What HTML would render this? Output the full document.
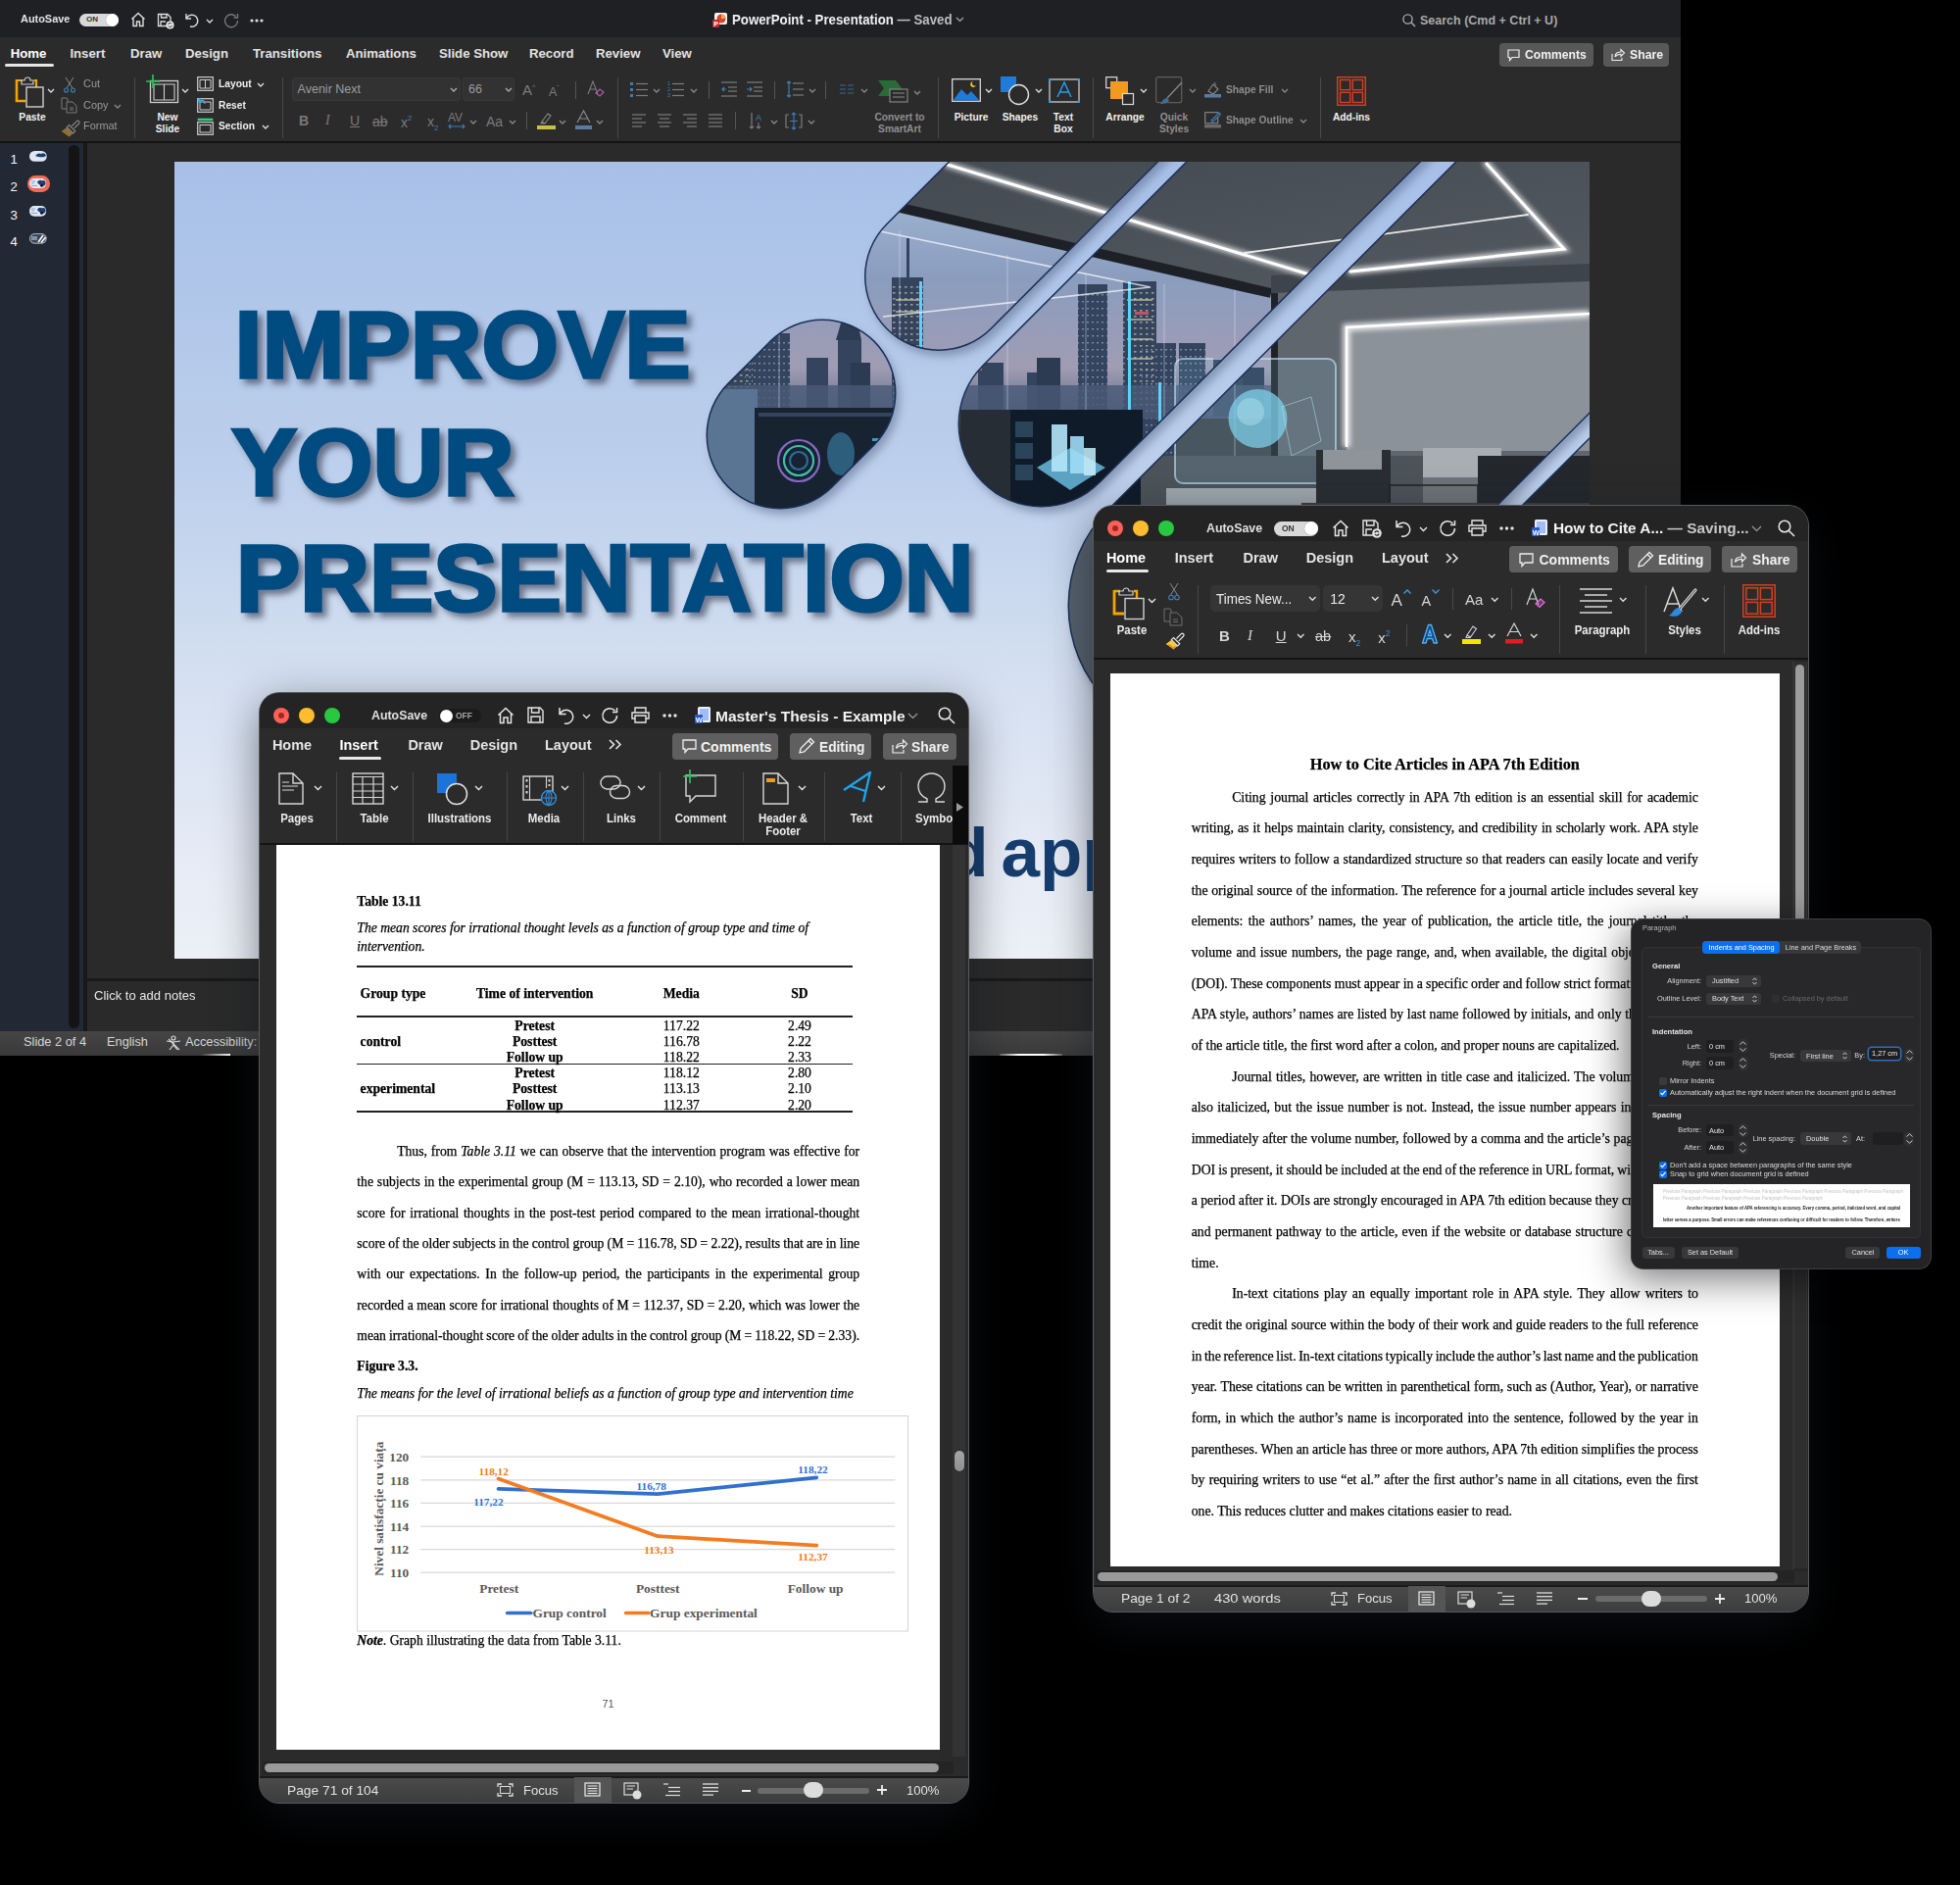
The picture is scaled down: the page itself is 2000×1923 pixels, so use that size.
<!DOCTYPE html>
<html><head><meta charset="utf-8">
<style>
*{margin:0;padding:0;box-sizing:border-box}
html,body{width:2000px;height:1923px;overflow:hidden;background:#000}
body{position:relative;font-family:"Liberation Sans",sans-serif;color:#e8e8e8}
.a{position:absolute}
.t{position:absolute;white-space:nowrap;line-height:1}
.b{font-weight:bold}
svg{position:absolute;overflow:visible}
.ic{fill:none;stroke:#cfcfcf;stroke-width:1.3}
.dim{color:#8e8e8e}
.ser{font-family:"Liberation Serif",serif;color:#000}
</style></head><body>
<div id="ppt" class="a" style="left:0;top:0;width:1715px;height:1077px;background:#2a2a2a;overflow:hidden">
<div class="a" style="left:0;top:0;width:1715px;height:38px;background:#1f2023"></div>
<div class="a" style="left:0;top:38px;width:1715px;height:106px;background:#2b2b2b"></div>
<div class="a" style="left:0;top:144px;width:1715px;height:2px;background:#131313"></div>
<div class="t" style="left:20.5px;top:14.4px;font-size:11.5px;color:#e4e4e4;font-weight:bold;transform:scaleX(0.95);transform-origin:0 0;">AutoSave</div>
<div class="a" style="left:81px;top:13.5px;width:40px;height:13.5px;border-radius:7px;background:#d9d9d9"></div><div class="t" style="left:88px;top:16.3px;font-size:8px;color:#333;font-weight:bold;">ON</div>
<div class="a" style="left:107.5px;top:14px;width:13px;height:12.5px;border-radius:7px;background:#fff;box-shadow:0 0 1px #777"></div>
<svg style="left:133px;top:12px" width="16" height="16"><path d="M1.5,7.5 L8,1.5 L14.5,7.5 M3,6.5 V14.5 H6.5 V10 H9.5 V14.5 H13 V6.5" fill="none" stroke="#ddd" stroke-width="1.4"/></svg>
<svg style="left:160px;top:12.5px" width="18" height="16"><path d="M1.5,1.5 H11 L14,4.5 V13.5 H1.5 Z M4.5,1.5 V5 H10 V1.5 M4,13.5 V9 H9" fill="none" stroke="#ddd" stroke-width="1.3"/><circle cx="13.5" cy="12.5" r="4" fill="#eee"/><path d="M11.6,12 A2,2 0 0 1 15.3,11.5 M15.4,13 A2,2 0 0 1 11.7,13.5" stroke="#222" fill="none" stroke-width="1"/></svg>
<svg style="left:188px;top:12px" width="16" height="16"><path d="M2,2 V7 H7 M2.3,6.8 A6,6 0 1 1 6,15" fill="none" stroke="#ddd" stroke-width="1.4"/></svg>
<svg style="left:211px;top:19.5px" width="6" height="3.0"><polyline points="0,0 3.0,3.0 6,0" fill="none" stroke="#ddd" stroke-width="1.4"/></svg>
<svg style="left:228px;top:12.5px" width="16" height="16"><path d="M12.5,3.5 A6.5,6.5 0 1 0 14.5,8 M14.5,1 V5 H10.5" fill="none" stroke="#777" stroke-width="1.4"/></svg>
<svg style="left:255px;top:19px" width="14" height="4"><circle cx="2" cy="2" r="1.6" fill="#ddd"/><circle cx="7" cy="2" r="1.6" fill="#ddd"/><circle cx="12" cy="2" r="1.6" fill="#ddd"/></svg>
<svg style="left:727px;top:13px" width="15" height="15"><rect x="2" y="0" width="13" height="12" rx="2" fill="#f5f5f5"/><circle cx="9" cy="6" r="4.5" fill="#d9452b"/><path d="M9,6 V1.5 A4.5,4.5 0 0 1 13.5,6 Z" fill="#f1a35a"/><rect x="0" y="7" width="7" height="8" rx="1" fill="#c4262e"/><text x="1.3" y="13.5" font-size="7" font-weight="bold" fill="#fff" font-family="Liberation Sans">P</text></svg>
<div class="t" style="left:746.5px;top:13.8px;font-size:13.8px;color:#f0f0f0;font-weight:bold;transform:scaleX(0.96);transform-origin:0 0;">PowerPoint - Presentation <span style="color:#bdbdbd">— Saved</span></div>
<svg style="left:976px;top:18.2px" width="7" height="3.5"><polyline points="0,0 3.5,3.5 7,0" fill="none" stroke="#aaa" stroke-width="1.2"/></svg>
<svg style="left:1431px;top:14px" width="14" height="14"><circle cx="5.5" cy="5.5" r="4.6" fill="none" stroke="#a8a8a8" stroke-width="1.4"/><line x1="8.8" y1="8.8" x2="13" y2="13" stroke="#a8a8a8" stroke-width="1.5"/></svg>
<div class="t" style="left:1449px;top:15.4px;font-size:12.5px;color:#a9a9a9;font-weight:bold;">Search (Cmd + Ctrl + U)</div>
<div class="t" style="left:10.7px;top:47.6px;font-size:13.2px;color:#ffffff;font-weight:bold;">Home</div>
<div class="t" style="left:71.4px;top:47.6px;font-size:13.2px;color:#e2e2e2;font-weight:bold;">Insert</div>
<div class="t" style="left:133px;top:47.6px;font-size:13.2px;color:#e2e2e2;font-weight:bold;">Draw</div>
<div class="t" style="left:189px;top:47.6px;font-size:13.2px;color:#e2e2e2;font-weight:bold;">Design</div>
<div class="t" style="left:258px;top:47.6px;font-size:13.2px;color:#e2e2e2;font-weight:bold;">Transitions</div>
<div class="t" style="left:353px;top:47.6px;font-size:13.2px;color:#e2e2e2;font-weight:bold;">Animations</div>
<div class="t" style="left:448px;top:47.6px;font-size:13.2px;color:#e2e2e2;font-weight:bold;">Slide Show</div>
<div class="t" style="left:540px;top:47.6px;font-size:13.2px;color:#e2e2e2;font-weight:bold;">Record</div>
<div class="t" style="left:608px;top:47.6px;font-size:13.2px;color:#e2e2e2;font-weight:bold;">Review</div>
<div class="t" style="left:676px;top:47.6px;font-size:13.2px;color:#e2e2e2;font-weight:bold;">View</div>
<div class="a" style="left:5px;top:65px;width:50px;height:3px;border-radius:2px;background:#e6e6e6"></div>
<div class="a" style="left:1530px;top:44px;width:96px;height:24px;border-radius:4px;background:#585858"></div>
<svg style="left:1538px;top:50px" width="13" height="13"><path d="M1,1 H12 V8.5 H5 L2.5,11.5 V8.5 H1 Z" fill="none" stroke="#eee" stroke-width="1.2"/></svg>
<div class="t" style="left:1556px;top:49.8px;font-size:12.8px;color:#f2f2f2;font-weight:bold;transform:scaleX(0.95);transform-origin:0 0;">Comments</div>
<div class="a" style="left:1636px;top:44px;width:67px;height:24px;border-radius:4px;background:#585858"></div>
<svg style="left:1644px;top:49px" width="14" height="14"><path d="M1,6 V12.5 H11 V10 M4,9 C4,5 7,4 10,4 V1.5 L13.5,5 L10,8.5 V6.2 C7.5,6.2 5.5,7 4,9" fill="none" stroke="#eee" stroke-width="1.1"/></svg>
<div class="t" style="left:1663px;top:49.8px;font-size:12.8px;color:#f2f2f2;font-weight:bold;transform:scaleX(0.96);transform-origin:0 0;">Share</div>
<svg style="left:15px;top:77px" width="32" height="33"><path d="M2,5 H8 M20,5 H22 V16" fill="none" stroke="#f2a500" stroke-width="2.2"/><path d="M2,4 V26 H11" fill="none" stroke="#f2a500" stroke-width="2.6"/><path d="M7,5 H10 A3,3 0 0 1 16,5 H19 V9 H7 Z" fill="none" stroke="#cfcfcf" stroke-width="1.2"/><rect x="12" y="12" width="17" height="20" fill="#2b2b2b" stroke="#d0d0d0" stroke-width="1.4"/></svg>
<svg style="left:49px;top:90.5px" width="6" height="3.0"><polyline points="0,0 3.0,3.0 6,0" fill="none" stroke="#ddd" stroke-width="1.4"/></svg>
<div class="t" style="left:33px;top:113.9px;font-size:11.5px;color:#f0f0f0;font-weight:bold;transform:translateX(-50%) scaleX(0.89);transform-origin:50% 0;">Paste</div>
<svg style="left:64px;top:79px" width="14" height="16"><path d="M3,0 L10,11 M11,0 L4,11" stroke="#8a8a8a" stroke-width="1" fill="none"/><circle cx="3.5" cy="13" r="2" fill="none" stroke="#3f7fb5" stroke-width="1.1"/><circle cx="10.5" cy="13" r="2" fill="none" stroke="#3f7fb5" stroke-width="1.1"/></svg>
<div class="t" style="left:84.6px;top:79.8px;font-size:11.5px;color:#9a9a9a;transform:scaleX(0.95);transform-origin:0 0;">Cut</div>
<svg style="left:62px;top:99px" width="17" height="17"><path d="M1,1 H6 L7,2 V12 H1 Z" fill="none" stroke="#7a7a7a" stroke-width="1"/><path d="M6,5 H12 L16,9 V16 H6 Z M9,11 H13 M9,13 H13" fill="#2b2b2b" stroke="#7a7a7a" stroke-width="1"/></svg>
<div class="t" style="left:84.6px;top:101.9px;font-size:11.5px;color:#9a9a9a;transform:scaleX(0.95);transform-origin:0 0;">Copy</div>
<svg style="left:116.5px;top:106.5px" width="6" height="3.0"><polyline points="0,0 3.0,3.0 6,0" fill="none" stroke="#888" stroke-width="1.4"/></svg>
<svg style="left:62px;top:121px" width="20" height="19"><path d="M11.5,7.5 L16.3,2.7 A1.6,1.6 0 0 1 18.6,5 L13.8,9.8" fill="none" stroke="#8a8a8a" stroke-width="1.1"/><path d="M8.5,6.5 L14.8,12.8 L12.6,15 L6.3,8.7 Z" fill="none" stroke="#8a8a8a" stroke-width="1.1"/><path d="M6.3,8.7 L12.6,15 L8.5,18.5 L0.8,13 Z" fill="#8b7045"/><path d="M3.5,13.5 L8.5,17.5 L10.5,15.5" fill="none" stroke="#9a6a30" stroke-width="1.5"/></svg>
<div class="t" style="left:84.6px;top:123.4px;font-size:11.5px;color:#9a9a9a;transform:scaleX(0.95);transform-origin:0 0;">Format</div>
<div class="a" style="left:137px;top:79px;width:1px;height:62px;background:#4a4a4a"></div>
<svg style="left:149px;top:76px" width="34" height="30"><rect x="4.5" y="6.5" width="28" height="22" fill="none" stroke="#cfcfcf" stroke-width="1.3"/><path d="M8,10 H29 V26 H8 Z M18.5,10 V26" fill="none" stroke="#cfcfcf" stroke-width="1.1"/><path d="M7,0 V14 M0,7 H14" stroke="#22c35e" stroke-width="1.7"/></svg>
<svg style="left:186px;top:90.5px" width="6" height="3.0"><polyline points="0,0 3.0,3.0 6,0" fill="none" stroke="#ddd" stroke-width="1.4"/></svg>
<div class="t" style="left:171px;top:113.9px;font-size:11.5px;color:#f0f0f0;font-weight:bold;transform:translateX(-50%) scaleX(0.89);transform-origin:50% 0;">New</div>
<div class="t" style="left:171px;top:125.9px;font-size:11.5px;color:#f0f0f0;font-weight:bold;transform:translateX(-50%) scaleX(0.89);transform-origin:50% 0;">Slide</div>
<svg style="left:201px;top:78px" width="17" height="15"><rect x="0.7" y="0.7" width="15.6" height="13.6" fill="none" stroke="#cfcfcf" stroke-width="1.2"/><path d="M3,3.5 H14 V12 H3 Z M8.5,3.5 V12" fill="none" stroke="#cfcfcf" stroke-width="1"/></svg>
<div class="t" style="left:223px;top:80.1px;font-size:11.5px;color:#f0f0f0;font-weight:bold;transform:scaleX(0.89);transform-origin:0 0;">Layout</div>
<svg style="left:263px;top:84.5px" width="6" height="3.0"><polyline points="0,0 3.0,3.0 6,0" fill="none" stroke="#ddd" stroke-width="1.4"/></svg>
<svg style="left:201px;top:99px" width="17" height="16"><rect x="0.7" y="1.7" width="15.6" height="13.6" fill="none" stroke="#cfcfcf" stroke-width="1.2"/><path d="M3,5 H14 V13 H3 Z" fill="none" stroke="#cfcfcf" stroke-width="1"/><path d="M1,3.5 L3.5,1 M1,3.5 L3.5,6 M1.5,3.5 H5 A3,3 0 0 1 8,7" fill="none" stroke="#3fa6e8" stroke-width="1.4"/></svg>
<div class="t" style="left:223px;top:101.9px;font-size:11.5px;color:#f0f0f0;font-weight:bold;transform:scaleX(0.89);transform-origin:0 0;">Reset</div>
<svg style="left:201px;top:120px" width="17" height="18"><rect x="0.7" y="0.7" width="15.6" height="2.5" fill="#2fd07a"/><rect x="0.7" y="4.7" width="15.6" height="12.6" fill="none" stroke="#cfcfcf" stroke-width="1.2"/><rect x="3" y="7.5" width="11" height="7.5" fill="none" stroke="#cfcfcf" stroke-width="1"/></svg>
<div class="t" style="left:223px;top:123.4px;font-size:11.5px;color:#f0f0f0;font-weight:bold;transform:scaleX(0.89);transform-origin:0 0;">Section</div>
<svg style="left:268px;top:128.0px" width="6" height="3.0"><polyline points="0,0 3.0,3.0 6,0" fill="none" stroke="#ddd" stroke-width="1.4"/></svg>
<div class="a" style="left:287.5px;top:79px;width:1px;height:62px;background:#4a4a4a"></div>
<div class="a" style="left:297.5px;top:79px;width:172px;height:24px;border-radius:4px;background:#323232;box-shadow:inset 0 0 0 1px #383838"></div>
<div class="t" style="left:303.6px;top:84.9px;font-size:12.5px;color:#9d9d9d;">Avenir Next</div>
<svg style="left:459.5px;top:90.0px" width="6" height="3.0"><polyline points="0,0 3.0,3.0 6,0" fill="none" stroke="#aaa" stroke-width="1.4"/></svg>
<div class="a" style="left:472px;top:79px;width:53px;height:24px;border-radius:4px;background:#323232;box-shadow:inset 0 0 0 1px #383838"></div>
<div class="t" style="left:478px;top:84.9px;font-size:12.5px;color:#9d9d9d;">66</div>
<svg style="left:515.5px;top:90.0px" width="6" height="3.0"><polyline points="0,0 3.0,3.0 6,0" fill="none" stroke="#aaa" stroke-width="1.4"/></svg>
<div class="t" style="left:533px;top:83.7px;font-size:15px;color:#7c7c7c;">A<sup style="font-size:7px;vertical-align:6px">^</sup></div>
<div class="t" style="left:560px;top:85.9px;font-size:12.5px;color:#7c7c7c;">A<sup style="font-size:7px;vertical-align:6px;color:#4b8fc4">ˇ</sup></div>
<div class="a" style="left:587px;top:83px;width:1px;height:18px;background:#555"></div>
<svg style="left:599px;top:82px" width="18" height="18"><path d="M1,14 L6,1 L11,14 M3,9 H9" fill="none" stroke="#7c7c7c" stroke-width="1.1"/><path d="M9,13 L13,9 L17,12 L13,16 Z" fill="none" stroke="#b05aa8" stroke-width="1.2"/></svg>
<svg style="left:643px;top:83px" width="18" height="16"><g fill="#3d7eb8"><rect x="0" y="1" width="3" height="3"/><rect x="0" y="7" width="3" height="3"/><rect x="0" y="13" width="3" height="3"/></g><g stroke="#7c7c7c" stroke-width="1.2"><line x1="6" y1="2.5" x2="18" y2="2.5"/><line x1="6" y1="8.5" x2="18" y2="8.5"/><line x1="6" y1="14.5" x2="18" y2="14.5"/></g></svg>
<svg style="left:667px;top:90.5px" width="6" height="3.0"><polyline points="0,0 3.0,3.0 6,0" fill="none" stroke="#888" stroke-width="1.4"/></svg>
<svg style="left:681px;top:82px" width="17" height="18"><g fill="#3d7eb8" font-size="5.5" font-family="Liberation Sans"><text x="0" y="5">1</text><text x="0" y="11">2</text><text x="0" y="17">3</text></g><g stroke="#7c7c7c" stroke-width="1.2"><line x1="5" y1="3.5" x2="17" y2="3.5"/><line x1="5" y1="9.5" x2="17" y2="9.5"/><line x1="5" y1="15.5" x2="17" y2="15.5"/></g></svg>
<svg style="left:705px;top:90.5px" width="6" height="3.0"><polyline points="0,0 3.0,3.0 6,0" fill="none" stroke="#888" stroke-width="1.4"/></svg>
<div class="a" style="left:723px;top:83px;width:1px;height:18px;background:#555"></div>
<svg style="left:736px;top:83px" width="16" height="16"><g stroke="#7c7c7c" stroke-width="1.2"><line x1="0" y1="1" x2="16" y2="1"/><line x1="7" y1="6" x2="16" y2="6"/><line x1="7" y1="10" x2="16" y2="10"/><line x1="0" y1="15" x2="16" y2="15"/></g><path d="M5,8 H1 M3,6 L1,8 L3,10" stroke="#3d7eb8" stroke-width="1.2" fill="none"/></svg>
<svg style="left:762px;top:83px" width="16" height="16"><g stroke="#7c7c7c" stroke-width="1.2"><line x1="0" y1="1" x2="16" y2="1"/><line x1="7" y1="6" x2="16" y2="6"/><line x1="7" y1="10" x2="16" y2="10"/><line x1="0" y1="15" x2="16" y2="15"/></g><path d="M0,8 H5 M3,6 L5,8 L3,10" stroke="#3d7eb8" stroke-width="1.2" fill="none"/></svg>
<div class="a" style="left:789.5px;top:83px;width:1px;height:18px;background:#555"></div>
<svg style="left:802px;top:82px" width="18" height="18"><g stroke="#7c7c7c" stroke-width="1.2"><line x1="7" y1="3" x2="18" y2="3"/><line x1="7" y1="9" x2="18" y2="9"/><line x1="7" y1="15" x2="18" y2="15"/></g><path d="M3,1 V17 M1,3 L3,1 L5,3 M1,15 L3,17 L5,15" stroke="#3d7eb8" stroke-width="1.2" fill="none"/></svg>
<svg style="left:826px;top:90.5px" width="6" height="3.0"><polyline points="0,0 3.0,3.0 6,0" fill="none" stroke="#888" stroke-width="1.4"/></svg>
<div class="a" style="left:842px;top:83px;width:1px;height:18px;background:#555"></div>
<svg style="left:857px;top:86px" width="14" height="10"><g stroke="#3d5f82" stroke-width="1.2"><line x1="0" y1="1" x2="6" y2="1"/><line x1="0" y1="5" x2="6" y2="5"/><line x1="0" y1="9" x2="6" y2="9"/><line x1="8" y1="1" x2="14" y2="1"/><line x1="8" y1="5" x2="14" y2="5"/><line x1="8" y1="9" x2="14" y2="9"/></g></svg>
<svg style="left:879px;top:90.5px" width="6" height="3.0"><polyline points="0,0 3.0,3.0 6,0" fill="none" stroke="#888" stroke-width="1.4"/></svg>
<svg style="left:896px;top:82px" width="31" height="23"><path d="M0,0 H18 L24,8 L18,16 H0 L6,8 Z" fill="#2a6b3a"/><rect x="12" y="9" width="18" height="13" fill="#2b2b2b" stroke="#8a8a8a" stroke-width="1.1"/><g stroke="#8a8a8a"><line x1="15" y1="13" x2="27" y2="13"/><line x1="15" y1="17" x2="27" y2="17"/></g></svg>
<svg style="left:933px;top:92.5px" width="6" height="3.0"><polyline points="0,0 3.0,3.0 6,0" fill="none" stroke="#888" stroke-width="1.4"/></svg>
<div class="t" style="left:918px;top:113.9px;font-size:11.5px;color:#8f8f8f;font-weight:bold;transform:translateX(-50%) scaleX(0.89);transform-origin:50% 0;">Convert to</div>
<div class="t" style="left:918px;top:125.9px;font-size:11.5px;color:#8f8f8f;font-weight:bold;transform:translateX(-50%) scaleX(0.89);transform-origin:50% 0;">SmartArt</div>
<div class="t" style="left:305px;top:116.2px;font-size:14px;color:#7a7a7a;font-weight:bold;">B</div>
<div class="t" style="left:332px;top:116.2px;font-size:14px;color:#7a7a7a;font-style:italic;font-family:Liberation Serif;">I</div>
<div class="t" style="left:357px;top:116.2px;font-size:14px;color:#7a7a7a;text-decoration:underline;">U</div>
<div class="t" style="left:380px;top:117.2px;font-size:14px;color:#7a7a7a;"><s>ab</s></div>
<div class="t" style="left:409px;top:117.2px;font-size:14px;color:#7a7a7a;">x<sup style="font-size:8px;color:#3d7eb8;vertical-align:7px">2</sup></div>
<div class="t" style="left:436px;top:117.2px;font-size:14px;color:#7a7a7a;">x<sub style="font-size:8px;color:#3d7eb8;vertical-align:-4px">2</sub></div>
<svg style="left:457px;top:114px" width="19" height="19"><text x="0" y="10" font-size="12" fill="#7a7a7a" font-family="Liberation Sans">AV</text><path d="M1,15 H17 M3,13 L1,15 L3,17 M15,13 L17,15 L15,17" stroke="#3d7eb8" stroke-width="1.1" fill="none"/></svg>
<svg style="left:480px;top:122.5px" width="6" height="3.0"><polyline points="0,0 3.0,3.0 6,0" fill="none" stroke="#888" stroke-width="1.4"/></svg>
<div class="t" style="left:496px;top:117.2px;font-size:14px;color:#7a7a7a;">Aa</div>
<svg style="left:520px;top:122.5px" width="6" height="3.0"><polyline points="0,0 3.0,3.0 6,0" fill="none" stroke="#888" stroke-width="1.4"/></svg>
<div class="a" style="left:536.5px;top:114px;width:1px;height:18px;background:#555"></div>
<svg style="left:548px;top:113px" width="19" height="20"><path d="M5,11 L11,3 L14,5 L8,13 Z M5,11 L4,13 H8" fill="none" stroke="#8a8a8a" stroke-width="1.1"/><rect x="0" y="15" width="19" height="4" fill="#c9c04a"/></svg>
<svg style="left:571px;top:122.5px" width="6" height="3.0"><polyline points="0,0 3.0,3.0 6,0" fill="none" stroke="#888" stroke-width="1.4"/></svg>
<svg style="left:587px;top:112px" width="17" height="21"><path d="M2,13 L8.5,1 L15,13 M4.5,9 H12.5" fill="none" stroke="#8a8a8a" stroke-width="1.2"/><rect x="0" y="16" width="17" height="4" fill="#5a7aa5"/></svg>
<svg style="left:609px;top:122.5px" width="6" height="3.0"><polyline points="0,0 3.0,3.0 6,0" fill="none" stroke="#888" stroke-width="1.4"/></svg>
<div class="a" style="left:630px;top:79px;width:1px;height:62px;background:#4a4a4a"></div>
<svg style="left:644.5px;top:116px" width="15" height="15"><g stroke="#7c7c7c" stroke-width="1.2"><line x1="0" y1="1" x2="14" y2="1"/><line x1="0" y1="5" x2="10" y2="5"/><line x1="0" y1="9" x2="14" y2="9"/><line x1="0" y1="13" x2="10" y2="13"/></g></svg>
<svg style="left:671px;top:116px" width="15" height="15"><g stroke="#7c7c7c" stroke-width="1.2"><line x1="0" y1="1" x2="14" y2="1"/><line x1="2" y1="5" x2="12" y2="5"/><line x1="0" y1="9" x2="14" y2="9"/><line x1="2" y1="13" x2="12" y2="13"/></g></svg>
<svg style="left:697px;top:116px" width="15" height="15"><g stroke="#7c7c7c" stroke-width="1.2"><line x1="0" y1="1" x2="14" y2="1"/><line x1="4" y1="5" x2="14" y2="5"/><line x1="0" y1="9" x2="14" y2="9"/><line x1="4" y1="13" x2="14" y2="13"/></g></svg>
<svg style="left:723px;top:116px" width="15" height="15"><g stroke="#7c7c7c" stroke-width="1.2"><line x1="0" y1="1" x2="14" y2="1"/><line x1="0" y1="5" x2="14" y2="5"/><line x1="0" y1="9" x2="14" y2="9"/><line x1="0" y1="13" x2="14" y2="13"/></g></svg>
<div class="a" style="left:750px;top:114px;width:1px;height:18px;background:#555"></div>
<svg style="left:764px;top:114px" width="16" height="19"><path d="M3,1 V17 M1,15 L3,17 L5,15" stroke="#7c7c7c" stroke-width="1.2" fill="none"/><text x="7" y="9" font-size="9" fill="#3d7eb8" font-family="Liberation Sans">A</text><path d="M10,11 V17 M8,15 L10,17 L12,15" stroke="#7c7c7c" stroke-width="1.1" fill="none"/></svg>
<svg style="left:786.5px;top:122.5px" width="6" height="3.0"><polyline points="0,0 3.0,3.0 6,0" fill="none" stroke="#888" stroke-width="1.4"/></svg>
<svg style="left:801px;top:115px" width="18" height="17"><path d="M4,2 H1 V15 H4 M14,2 H17 V15 H14" stroke="#7c7c7c" stroke-width="1.2" fill="none"/><path d="M9,0 V17 M7,2 L9,0 L11,2 M7,15 L9,17 L11,15 M5,8.5 H13" stroke="#3d7eb8" stroke-width="1.1" fill="none"/></svg>
<svg style="left:824.5px;top:122.5px" width="6" height="3.0"><polyline points="0,0 3.0,3.0 6,0" fill="none" stroke="#888" stroke-width="1.4"/></svg>
<div class="a" style="left:957px;top:79px;width:1px;height:62px;background:#4a4a4a"></div>
<svg style="left:971px;top:80px" width="30" height="24"><rect x="0.7" y="0.7" width="28.6" height="22.6" fill="#2b2b2b" stroke="#d8d8d8" stroke-width="1.3"/><path d="M1.5,22.5 L10,11 L16,17 L20,13 L28.5,22.5 Z" fill="#1e7bd8"/><path d="M22,3 A3,3 0 1 0 25,7 A2.5,2.5 0 0 1 22,3" fill="#f0c030"/></svg>
<svg style="left:1006px;top:90.5px" width="6" height="3.0"><polyline points="0,0 3.0,3.0 6,0" fill="none" stroke="#ddd" stroke-width="1.4"/></svg>
<div class="t" style="left:991px;top:113.9px;font-size:11.5px;color:#f0f0f0;font-weight:bold;transform:translateX(-50%) scaleX(0.89);transform-origin:50% 0;">Picture</div>
<svg style="left:1021px;top:78px" width="30" height="30"><rect x="0" y="0" width="16" height="16" fill="#1e7bd8"/><circle cx="18.5" cy="18.5" r="10" fill="#2b2b2b" stroke="#e0e0e0" stroke-width="1.4"/></svg>
<svg style="left:1057px;top:90.5px" width="6" height="3.0"><polyline points="0,0 3.0,3.0 6,0" fill="none" stroke="#ddd" stroke-width="1.4"/></svg>
<div class="t" style="left:1041px;top:113.9px;font-size:11.5px;color:#f0f0f0;font-weight:bold;transform:translateX(-50%) scaleX(0.89);transform-origin:50% 0;">Shapes</div>
<svg style="left:1070px;top:80px" width="32" height="25"><rect x="1" y="1" width="30" height="23" fill="none" stroke="#d8d8d8" stroke-width="1.2"/><g fill="#2a9df0"><rect x="0" y="0" width="2.5" height="2.5"/><rect x="29.5" y="0" width="2.5" height="2.5"/><rect x="0" y="22.5" width="2.5" height="2.5"/><rect x="29.5" y="22.5" width="2.5" height="2.5"/></g><path d="M9,19 L16,4 L23,19 M11.5,14 H20.5" fill="none" stroke="#2a9df0" stroke-width="1.4"/></svg>
<div class="t" style="left:1085px;top:113.9px;font-size:11.5px;color:#f0f0f0;font-weight:bold;transform:translateX(-50%) scaleX(0.89);transform-origin:50% 0;">Text</div>
<div class="t" style="left:1085px;top:125.9px;font-size:11.5px;color:#f0f0f0;font-weight:bold;transform:translateX(-50%) scaleX(0.89);transform-origin:50% 0;">Box</div>
<div class="a" style="left:1115px;top:79px;width:1px;height:62px;background:#4a4a4a"></div>
<svg style="left:1128px;top:78px" width="30" height="30"><rect x="0.7" y="0.7" width="11" height="11" fill="#2b2b2b" stroke="#ddd" stroke-width="1.2"/><rect x="5" y="5" width="18" height="18" fill="#f29a1f"/><rect x="17.5" y="17.5" width="11" height="11" fill="#2b2b2b" stroke="#ddd" stroke-width="1.2"/></svg>
<svg style="left:1164px;top:90.5px" width="6" height="3.0"><polyline points="0,0 3.0,3.0 6,0" fill="none" stroke="#ddd" stroke-width="1.4"/></svg>
<div class="t" style="left:1147.5px;top:113.9px;font-size:11.5px;color:#f0f0f0;font-weight:bold;transform:translateX(-50%) scaleX(0.89);transform-origin:50% 0;">Arrange</div>
<svg style="left:1179px;top:78px" width="30" height="30"><rect x="0.7" y="0.7" width="26" height="26" rx="2" fill="none" stroke="#5e5e5e" stroke-width="1.2"/><path d="M27,6 L12,22" stroke="#8a8a8a" stroke-width="1.2"/><path d="M12,22 C8,22 7,26 5,28 C9,28 13,27 14,24 Z" fill="#3d6f9a"/></svg>
<svg style="left:1214px;top:90.5px" width="6" height="3.0"><polyline points="0,0 3.0,3.0 6,0" fill="none" stroke="#888" stroke-width="1.4"/></svg>
<div class="t" style="left:1198px;top:113.9px;font-size:11.5px;color:#8f8f8f;font-weight:bold;transform:translateX(-50%) scaleX(0.89);transform-origin:50% 0;">Quick</div>
<div class="t" style="left:1198px;top:125.9px;font-size:11.5px;color:#8f8f8f;font-weight:bold;transform:translateX(-50%) scaleX(0.89);transform-origin:50% 0;">Styles</div>
<svg style="left:1229px;top:83px" width="17" height="17"><path d="M4,10 L9,3 L14,8 L9,13 Z" fill="none" stroke="#8a8a8a" stroke-width="1.1"/><path d="M10,1 L12,4" stroke="#8a8a8a"/><rect x="0" y="13" width="17" height="3.5" fill="#5a7aa5"/></svg>
<div class="t" style="left:1251px;top:85.8px;font-size:11.5px;color:#8f8f8f;font-weight:bold;transform:scaleX(0.89);transform-origin:0 0;">Shape Fill</div>
<svg style="left:1308px;top:90.5px" width="6" height="3.0"><polyline points="0,0 3.0,3.0 6,0" fill="none" stroke="#888" stroke-width="1.4"/></svg>
<svg style="left:1229px;top:114px" width="17" height="17"><rect x="0.7" y="0.7" width="13" height="11" fill="none" stroke="#8a8a8a" stroke-width="1.1"/><path d="M7,9 L15,1 L16.5,2.5 L8.5,10.5 Z" fill="#2b2b2b" stroke="#3d7eb8" stroke-width="1.1"/><rect x="0" y="13" width="17" height="3.5" fill="#6a6a6a"/></svg>
<div class="t" style="left:1251px;top:117.4px;font-size:11.5px;color:#8f8f8f;font-weight:bold;transform:scaleX(0.89);transform-origin:0 0;">Shape Outline</div>
<svg style="left:1327px;top:121.5px" width="6" height="3.0"><polyline points="0,0 3.0,3.0 6,0" fill="none" stroke="#888" stroke-width="1.4"/></svg>
<div class="a" style="left:1347px;top:79px;width:1px;height:62px;background:#4a4a4a"></div>
<svg style="left:1364px;top:78px" width="30" height="30"><g fill="none" stroke="#d5401f" stroke-width="1.4"><rect x="0.7" y="0.7" width="28.6" height="28.6"/><rect x="3.5" y="3.5" width="10.2" height="10.2"/><rect x="16.3" y="3.5" width="10.2" height="10.2"/><rect x="3.5" y="16.3" width="10.2" height="10.2"/><rect x="16.3" y="16.3" width="10.2" height="10.2"/></g></svg>
<div class="t" style="left:1379px;top:113.9px;font-size:11.5px;color:#f0f0f0;font-weight:bold;transform:translateX(-50%) scaleX(0.89);transform-origin:50% 0;">Add-ins</div>
<div class="a" style="left:0;top:146px;width:85px;height:906px;background:#222935"></div>
<div class="a" style="left:70px;top:148px;width:11px;height:901px;background:#141414;border-radius:6px"></div>
<div class="a" style="left:85px;top:146px;width:4px;height:906px;background:#181818"></div>
<div class="t" style="left:10.5px;top:156.1px;font-size:13.2px;color:#f4f4f4;">1</div>
<svg style="left:30.4px;top:153.8px" width="18" height="11"><rect x="0" y="0" width="17.7" height="10.7" rx="5.3" fill="#dfe7f2"/><path d="M6,5 C8,2 11,2 12,3 C14,1 17,3 17,5 C15,7 11,6 9,6 Z" fill="#1d3d70"/></svg>
<div class="t" style="left:10.5px;top:184.2px;font-size:13.2px;color:#f4f4f4;">2</div>
<div class="a" style="left:27.5px;top:179.2px;width:23.1px;height:16.4px;border-radius:8.2px;background:#f26a55"></div>
<svg style="left:30.4px;top:182.2px" width="18" height="11"><rect x="0" y="0" width="17.1" height="10.1" rx="5" fill="#dfe8f3"/><g stroke="#6f8fb8" stroke-width=".7"><line x1="2" y1="3" x2="6" y2="3"/><line x1="2" y1="5" x2="5" y2="5"/><line x1="2" y1="7.5" x2="8" y2="7.5"/></g><path d="M8,4 C9,1.5 12,1 13,2.5 C15,1 17,3 16.5,6 C15,8.5 12,8 11,7 C10,6 9,5.5 8,4 Z" fill="#1d3d70"/><circle cx="12.5" cy="7.5" r="1.3" fill="#000"/></svg>
<div class="t" style="left:10.5px;top:212.5px;font-size:13.2px;color:#f4f4f4;">3</div>
<svg style="left:30.4px;top:210px" width="18" height="11"><rect x="0" y="0" width="17.1" height="10.7" rx="5" fill="#dfe8f3"/><g stroke="#6f8fb8" stroke-width=".7"><line x1="2" y1="3" x2="6" y2="3"/><line x1="2" y1="5" x2="5" y2="5"/><line x1="2" y1="7.5" x2="8" y2="7.5"/></g><path d="M8,4 C9,1.5 12,1 13,2.5 C15,1 17,3 16.5,6 C15,8.5 12,8 11,7 C10,6 9,5.5 8,4 Z" fill="#1d3d70"/><circle cx="12.5" cy="7.5" r="1.3" fill="#000"/></svg>
<div class="t" style="left:10.5px;top:240.4px;font-size:13.2px;color:#f4f4f4;">4</div>
<svg style="left:30.4px;top:238px" width="18" height="11"><rect x="0" y="0" width="17.7" height="10.7" rx="5.3" fill="#5d6670"/><rect x="0.6" y="0.6" width="16.5" height="9.5" rx="4.8" fill="#3b4654" stroke="#c8ccd2" stroke-width=".8"/><path d="M9,9 L14,2 M12,9.5 L16.5,4" stroke="#fff" stroke-width="1.6"/><rect x="2" y="3" width="6" height="4" fill="#7d94aa"/></svg>
<div class="a" style="left:89px;top:998px;width:1626px;height:3px;background:#191919"></div>
<div class="t" style="left:96px;top:1008.9px;font-size:13.5px;color:#e8e8e8;transform:scaleX(0.965);transform-origin:0 0;">Click to add notes</div>
<div class="a" style="left:0;top:1052px;width:1715px;height:25px;background:linear-gradient(#454545,#393939)"></div>
<div class="t" style="left:24px;top:1057.3px;font-size:12.8px;color:#d6d6d6;">Slide 2 of 4</div>
<div class="t" style="left:109px;top:1057.3px;font-size:12.8px;color:#d6d6d6;">English</div>
<svg style="left:169px;top:1056px" width="16" height="16"><circle cx="8" cy="3" r="2" fill="none" stroke="#ddd" stroke-width="1.1"/><path d="M1,6 L8,7 L15,6 M8,7 V10 L4,15 M8,10 L12,15" fill="none" stroke="#ddd" stroke-width="1.1"/><path d="M3,4 L14,15" stroke="#ddd" stroke-width="1.1"/></svg>
<div class="t" style="left:189px;top:1057.3px;font-size:12.8px;color:#d6d6d6;">Accessibility:</div>
<div class="a" style="left:205px;top:1074.5px;width:30px;height:2px;background:linear-gradient(90deg,rgba(255,255,255,0),#fff)"></div>
<div class="a" style="left:1020px;top:1075px;width:64px;height:2px;background:linear-gradient(90deg,rgba(255,255,255,.2),#fff 30%,#fff 70%,rgba(255,255,255,.2))"></div>
<div id="slide" class="a" style="left:178px;top:165px;width:1444px;height:813px;background:linear-gradient(180deg,#a8c0e8 0%,#bdd0ec 40%,#d5e0f1 65%,#e4eaf5 85%,#edf0f7 100%);overflow:hidden">
<svg width="1444" height="813" style="left:0;top:0" viewBox="0 0 1444 813">
<defs>
 <linearGradient id="sky" x1="0" y1="0" x2="0" y2="1">
  <stop offset="0" stop-color="#a6bbda"/><stop offset=".45" stop-color="#8a9dbe"/><stop offset=".8" stop-color="#a09cb4"/><stop offset="1" stop-color="#5d6a85"/>
 </linearGradient>
 <linearGradient id="ceil" x1="0" y1="0" x2="1" y2="1">
  <stop offset="0" stop-color="#3f454d"/><stop offset="1" stop-color="#545a61"/>
 </linearGradient>
 <linearGradient id="wall" x1="0" y1="0" x2="0" y2="1">
  <stop offset="0" stop-color="#8a9199"/><stop offset="1" stop-color="#737a83"/>
 </linearGradient>
 <pattern id="win" width="6" height="6" patternUnits="userSpaceOnUse"><rect x="1" y="1" width="2.5" height="1.6" fill="#f3e4b0" opacity=".55"/></pattern>
 <pattern id="win2" width="5" height="7" patternUnits="userSpaceOnUse"><rect x="1" y="2" width="2" height="1.4" fill="#cfe6ff" opacity=".45"/></pattern>
 <filter id="blur4" x="-50%" y="-50%" width="200%" height="200%"><feGaussianBlur stdDeviation="5"/></filter>
 <filter id="glow" x="-50%" y="-50%" width="200%" height="200%"><feGaussianBlur stdDeviation="2.5"/></filter>
 <filter id="tsh" x="-10%" y="-10%" width="130%" height="140%"><feDropShadow dx="5" dy="5" stdDeviation="3" flood-color="#2a3548" flood-opacity=".6"/></filter>
 <mask id="pm" maskUnits="userSpaceOnUse" x="0" y="0" width="1444" height="813">
  <g stroke="#fff" stroke-linecap="round">
  <line x1="618" y1="279" x2="661" y2="236" stroke-width="148"/><line x1="780" y1="117" x2="1322" y2="-425" stroke-width="149"/><line x1="884.5" y1="267.5" x2="1522" y2="-370" stroke-width="167"/><line x1="1051" y1="453" x2="1822" y2="-318" stroke-width="276"/><line x1="1292" y1="633" x2="1952" y2="-27" stroke-width="280"/>
  </g>
 </mask>
</defs>
<!-- pill shadows -->
<g stroke="#4d5f80" stroke-opacity=".5" stroke-linecap="round" filter="url(#blur4)">
 <line x1="622" y1="285" x2="665" y2="242" stroke-width="150"/><line x1="784" y1="123" x2="1326" y2="-419" stroke-width="151"/><line x1="888.5" y1="273.5" x2="1526" y2="-364" stroke-width="169"/><line x1="1055" y1="459" x2="1826" y2="-312" stroke-width="278"/><line x1="1296" y1="639" x2="1956" y2="-21" stroke-width="282"/>
</g>
<!-- pill borders -->
<g stroke="#1b2f57" stroke-linecap="round">
 <line x1="618" y1="279" x2="661" y2="236" stroke-width="151"/><line x1="780" y1="117" x2="1322" y2="-425" stroke-width="152"/><line x1="884.5" y1="267.5" x2="1522" y2="-370" stroke-width="170"/><line x1="1051" y1="453" x2="1822" y2="-318" stroke-width="279"/><line x1="1292" y1="633" x2="1952" y2="-27" stroke-width="283"/>
</g>
<!-- photo -->
<g mask="url(#pm)">
 <rect x="480" y="0" width="964" height="813" fill="#3d434a"/>
 <rect x="480" y="0" width="640" height="262" fill="url(#sky)"/>
 <g fill="#34445e">
  <rect x="540" y="150" width="50" height="110"/><rect x="582" y="175" width="46" height="85"/><rect x="677" y="182" width="24" height="78"/><rect x="645" y="200" width="22" height="60"/>
  <rect x="732" y="118" width="32" height="142"/><rect x="747" y="78" width="3" height="40"/>
  <rect x="820" y="205" width="26" height="55"/><rect x="870" y="215" width="20" height="45"/>
  <rect x="922" y="125" width="30" height="135"/><rect x="968" y="122" width="34" height="138"/><rect x="1025" y="185" width="27" height="75"/>
  <rect x="987" y="185" width="35" height="130"/><rect x="1060" y="200" width="30" height="60"/>
 </g>
 <g fill="url(#win)">
  <rect x="540" y="160" width="50" height="100"/><rect x="732" y="125" width="32" height="130"/><rect x="968" y="130" width="34" height="125"/>
 </g>
 <g fill="url(#win2)">
  <rect x="582" y="180" width="46" height="80"/><rect x="922" y="130" width="30" height="125"/><rect x="1025" y="190" width="27" height="70"/><rect x="987" y="190" width="35" height="120"/>
 </g>
 <g fill="#2c3a52">
  <rect x="690" y="205" width="20" height="55"/><rect x="880" y="200" width="24" height="60"/><rect x="1090" y="210" width="22" height="50"/><polygon points="620,140 626,100 632,140"/><polygon points="675,182 690,130 701,182"/>
 </g>
 <rect x="480" y="228" width="640" height="34" fill="#4a5a77" opacity=".8"/>
 <g fill="#f6e8b8" opacity=".5">
  <rect x="545" y="168" width="40" height="2.5"/><rect x="545" y="180" width="40" height="2.5"/><rect x="545" y="194" width="40" height="2.5"/><rect x="736" y="140" width="24" height="2"/><rect x="736" y="152" width="24" height="2"/><rect x="972" y="140" width="26" height="2"/><rect x="972" y="160" width="26" height="2"/><rect x="972" y="180" width="26" height="2"/><rect x="972" y="200" width="26" height="2"/>
 </g>
 <g fill="#ff5a6a" opacity=".7"><rect x="812" y="210" width="12" height="3"/><rect x="980" y="153" width="14" height="3"/></g>
 <g fill="#5fd0f8"><rect x="760" y="122" width="3" height="138"/><rect x="973" y="122" width="3" height="138"/><rect x="1004" y="225" width="3" height="40"/></g>
 <g stroke="#dfe8f4" stroke-opacity=".3" stroke-width="1.5">
  <line x1="617" y1="40" x2="617" y2="262"/><line x1="740" y1="70" x2="740" y2="262"/><line x1="850" y1="95" x2="850" y2="262"/><line x1="930" y1="115" x2="930" y2="262"/><line x1="1010" y1="125" x2="1010" y2="262"/><line x1="1082" y1="130" x2="1082" y2="320"/>
 </g>
 <g stroke="#f4f8ff" fill="none" stroke-opacity=".75" stroke-width="1.6"><polyline points="720,71 996,128 723,158"/></g>
 <!-- ceiling -->
 <polygon points="480,-30 1444,-30 1444,120 1119,134 480,-13" fill="url(#ceil)"/>
 <polyline points="480,-13 1119,134" fill="none" stroke="#1d2127" stroke-width="10"/>
 <polygon points="1119,116 1444,104 1444,124 1119,136" fill="#3e444b"/>
 <g stroke="#ffffff" fill="none" stroke-linecap="round">
  <polyline points="789,3 1158,115" stroke-width="7" filter="url(#glow)" stroke-opacity=".7"/>
  <polyline points="789,3 1158,115" stroke-width="3"/>
  <polyline points="1339,2 1418,89 1200,112" stroke-width="7" filter="url(#glow)" stroke-opacity=".7"/>
  <polyline points="1339,2 1418,89 1200,112" stroke-width="3"/>
  <polyline points="1092,93 1381,54" stroke-width="1.8" stroke-opacity=".85"/>
 </g>
 <!-- wall -->
 <polygon points="1119,134 1444,122 1444,320 1119,320" fill="#5f666e"/>
 <rect x="1119" y="134" width="7" height="186" fill="#1f2328"/>
 <polygon points="1196,169 1444,156 1444,295 1196,295" fill="#8c9299"/>
 <g stroke="#fff" fill="none">
  <polyline points="1196,291 1196,169 1444,155" stroke-width="8" filter="url(#glow)" stroke-opacity=".75"/>
  <polyline points="1196,291 1196,169 1444,155" stroke-width="2.5"/>
 </g>
 <!-- monitors -->
 <rect x="540" y="232" width="55" height="130" fill="#5a7594"/>
 <rect x="592" y="251" width="175" height="110" fill="#172331"/>
 <rect x="596" y="256" width="165" height="4" fill="#31465c"/>
 <g fill="none" stroke-width="2.2"><circle cx="637" cy="305" r="21" stroke="#9a74e0" opacity=".85"/><circle cx="637" cy="305" r="15" stroke="#4cd6c4" opacity=".85"/><circle cx="637" cy="305" r="9" stroke="#3aa0e0" opacity=".6"/></g>
 <ellipse cx="680" cy="298" rx="14" ry="22" fill="#4aa6d8" opacity=".45"/>
 <g fill="#4fb8e0" opacity=".8"><rect x="712" y="282" width="36" height="3"/><rect x="712" y="293" width="30" height="3"/><rect x="712" y="304" width="34" height="3" fill="#52d08a"/><rect x="712" y="315" width="26" height="3"/><rect x="712" y="326" width="20" height="3" fill="#e060a0"/></g>
 <rect x="802" y="253" width="52" height="110" fill="#262d35"/>
 <rect x="853" y="253" width="135" height="110" fill="#0f1b28"/>
 <g fill="#2e4a60" opacity=".9"><rect x="858" y="265" width="18" height="16"/><rect x="858" y="287" width="18" height="16"/><rect x="858" y="309" width="18" height="16"/></g>
 <polygon points="880,312 914,292 950,312 914,335" fill="#6fc4ea" opacity=".8"/>
 <rect x="895" y="268" width="16" height="48" fill="#b4e6fa" opacity=".9"/><rect x="914" y="280" width="14" height="38" fill="#9edcf6" opacity=".9"/><rect x="928" y="292" width="12" height="28" fill="#c8eefc" opacity=".85"/>
 <!-- room floor -->
 <rect x="986" y="300" width="458" height="513" fill="#4c535a"/>
 <rect x="1012" y="333" width="170" height="20" fill="#9fa8ae"/>
 <rect x="1021" y="201" width="164" height="127" rx="8" fill="#8fd0e8" fill-opacity=".14" stroke="#c2ecfa" stroke-opacity=".6" stroke-width="2"/>
 <circle cx="1105.5" cy="262" r="30" fill="#7fd0ea" opacity=".75"/><circle cx="1098" cy="255" r="14" fill="#c8f0fc" opacity=".35"/>
 <g fill="none" stroke="#b8e8f8" stroke-opacity=".5" stroke-width="1"><polyline points="1130,250 1160,240 1170,285 1140,300 1130,250"/></g>
 <rect x="1165" y="294" width="76" height="54" fill="#2a2e33"/><rect x="1172" y="294" width="60" height="20" fill="#8e949a"/>
 <rect x="1274" y="292" width="80" height="50" fill="#a9aeb3"/><rect x="1274" y="322" width="80" height="26" fill="#6e7479"/>
 <rect x="1240" y="330" width="90" height="20" fill="none" stroke="#222" stroke-width="1.5"/>
 <rect x="1330" y="300" width="114" height="513" fill="#24282d"/>
 <rect x="1150" y="348" width="294" height="465" fill="#3a3f45"/>
 <rect x="880" y="363" width="270" height="450" fill="#56616d"/>
</g>
<!-- title text -->
<g font-family="Liberation Sans" font-weight="bold" fill="#064b80" stroke="#064b80" stroke-width="3.5" stroke-linejoin="miter" stroke-miterlimit="3" filter="url(#tsh)">
 <text transform="translate(61.5,220) scale(1.0506,1)" font-size="96">IMPROVE</text>
 <text transform="translate(58.2,339.5) scale(1.04,1)" font-size="96">YOUR</text>
 <text transform="translate(62.9,458) scale(1.02,1)" font-size="96">PRESENTATION</text>
</g>
<g font-family="Liberation Sans" font-weight="bold" font-size="71" fill="#163d6e"><text x="744" y="729">nd</text><text x="843.5" y="729">app</text></g>
</svg>

</div>
</div>
<div id="w1" class="a" style="left:265px;top:707px;width:723px;height:1132px;background:#2b2b2b;border-radius:20px;overflow:hidden;box-shadow:0 0 0 1px #5a5a5a, 0 12px 45px rgba(20,25,35,.55)">
<div class="a" style="left:0.0px;top:0.0px;width:724.0px;height:36.0px;background:#242424;"></div>
<div class="a" style="left:0.0px;top:153.0px;width:724.0px;height:2.0px;background:#141414;"></div>
<div class="a" style="left:13.8px;top:14.9px;width:16.0px;height:16.0px;background:#fe5f57;border-radius:8px"></div>
<div class="a" style="left:39.9px;top:14.9px;width:16.0px;height:16.0px;background:#febc2e;border-radius:8px"></div>
<div class="a" style="left:66.0px;top:14.9px;width:16.0px;height:16.0px;background:#28c840;border-radius:8px"></div>
<div class="a" style="left:18.8px;top:19.9px;width:6.0px;height:6.0px;background:#9a2a25;border-radius:3px"></div>
<div class="t" style="left:114.2px;top:16.9px;font-size:12.5px;color:#e0e0e0;font-weight:bold;transform:scaleX(0.99);transform-origin:0 0;">AutoSave</div>
<div class="a" style="left:183.0px;top:16.0px;width:43.0px;height:14.0px;background:#1b1b1b;border-radius:7px"></div>
<div class="a" style="left:184.0px;top:17.0px;width:12.5px;height:12.5px;background:#ffffff;border-radius:7px"></div>
<div class="t" style="left:200.0px;top:19.1px;font-size:8.5px;color:#a5a5a5;font-weight:bold;">OFF</div>
<svg style="left:242.0px;top:14.0px;" width="18" height="18" viewBox="0 0 18 18"><path d="M1.5,8.5 L9,1.5 L16.5,8.5 M3.5,7 V16.5 H7 V11 H11 V16.5 H14.5 V7" fill="none" stroke="#e6e6e6" stroke-width="1.5"/></svg>
<svg style="left:272.5px;top:14.0px;" width="17" height="17" viewBox="0 0 17 17"><path d="M1,1 H13 L16,4 V16 H1 Z M4.5,1 V6 H12 V1 M4,16 V10 H13 V16" fill="none" stroke="#e6e6e6" stroke-width="1.4"/></svg>
<svg style="left:304.0px;top:14.0px;" width="18" height="18" viewBox="0 0 18 18"><path d="M2,1 V7.5 H8.5 M2.4,7.2 A7,7 0 1 1 7,17" fill="none" stroke="#e6e6e6" stroke-width="1.5"/></svg>
<svg style="left:329.5px;top:22.2px" width="7" height="3.5"><polyline points="0,0 3.5,3.5 7,0" fill="none" stroke="#e6e6e6" stroke-width="1.4"/></svg>
<svg style="left:348.0px;top:14.0px;" width="18" height="18" viewBox="0 0 18 18"><path d="M14.5,4 A7.3,7.3 0 1 0 16.5,9 M16.5,1 V5.5 H12" fill="none" stroke="#e6e6e6" stroke-width="1.5"/></svg>
<svg style="left:378.6px;top:14.0px;" width="19" height="17" viewBox="0 0 19 17"><path d="M4,6 V1 H15 V6 M4,12 H1 V6 H18 V12 H15 M4,9 H15 V16 H4 Z" fill="none" stroke="#e6e6e6" stroke-width="1.4"/></svg>
<svg style="left:411.0px;top:21.0px;" width="15" height="4" viewBox="0 0 15 4"><circle cx="2" cy="2" r="1.7" fill="#e6e6e6"/><circle cx="7.5" cy="2" r="1.7" fill="#e6e6e6"/><circle cx="13" cy="2" r="1.7" fill="#e6e6e6"/></svg>
<svg style="left:443.8px;top:14.0px;" width="16" height="17" viewBox="0 0 16 17"><rect x="3" y="0" width="13" height="16" rx="1.5" fill="#e9eefc"/><rect x="5" y="2" width="9" height="12" fill="#5b8cf0" opacity=".5"/><rect x="0" y="8" width="8" height="9" rx="1" fill="#2a5cc9"/><text x="0.8" y="15.5" font-size="7.5" font-weight="bold" fill="#fff" font-family="Liberation Sans">W</text></svg>
<div class="t" style="left:465.4px;top:16.2px;font-size:15px;color:#f4f4f4;font-weight:bold;transform:scaleX(1.035);transform-origin:0 0;">Master's Thesis - Example</div>
<svg style="left:662.0px;top:20.8px" width="9" height="4.5"><polyline points="0,0 4.5,4.5 9,0" fill="none" stroke="#9a9a9a" stroke-width="1.2"/></svg>
<svg style="left:691.5px;top:14.0px;" width="18" height="18" viewBox="0 0 18 18"><circle cx="7" cy="7" r="5.8" fill="none" stroke="#e6e6e6" stroke-width="1.5"/><line x1="11.2" y1="11.2" x2="17" y2="17" stroke="#e6e6e6" stroke-width="1.6"/></svg>
<div class="t" style="left:12.9px;top:45.5px;font-size:14.5px;color:#e4e4e4;font-weight:bold;">Home</div>
<div class="t" style="left:81.4px;top:45.5px;font-size:14.5px;color:#ffffff;font-weight:bold;">Insert</div>
<div class="t" style="left:151.4px;top:45.5px;font-size:14.5px;color:#e4e4e4;font-weight:bold;">Draw</div>
<div class="t" style="left:214.7px;top:45.5px;font-size:14.5px;color:#e4e4e4;font-weight:bold;">Design</div>
<div class="t" style="left:291.0px;top:45.5px;font-size:14.5px;color:#e4e4e4;font-weight:bold;">Layout</div>
<svg style="left:356.0px;top:47.0px;" width="14" height="11" viewBox="0 0 14 11"><path d="M1,1 L5.5,5.5 L1,10 M7.5,1 L12,5.5 L7.5,10" fill="none" stroke="#e4e4e4" stroke-width="1.6"/></svg>
<div class="a" style="left:81.4px;top:64.5px;width:43.0px;height:3.5px;background:#e8e8e8;border-radius:2px"></div>
<div class="a" style="left:421.4px;top:40.7px;width:108.1px;height:27.3px;background:#5f5f5f;border-radius:4px"></div>
<div class="t" style="left:450.0px;top:47.7px;font-size:14px;color:#f2f2f2;font-weight:bold;">Comments</div>
<div class="a" style="left:541.4px;top:40.7px;width:83.0px;height:27.3px;background:#5f5f5f;border-radius:4px"></div>
<div class="t" style="left:571.0px;top:47.7px;font-size:14px;color:#f2f2f2;font-weight:bold;transform:scaleX(0.98);transform-origin:0 0;">Editing</div>
<div class="a" style="left:636.4px;top:40.7px;width:74.4px;height:27.3px;background:#5f5f5f;border-radius:4px"></div>
<div class="t" style="left:665.4px;top:47.7px;font-size:14px;color:#f2f2f2;font-weight:bold;transform:scaleX(0.99);transform-origin:0 0;">Share</div>
<svg style="left:430.7px;top:47.0px;" width="15" height="15" viewBox="0 0 15 15"><path d="M1,1 H14 V10 H6 L3,13.5 V10 H1 Z" fill="none" stroke="#eee" stroke-width="1.3"/></svg>
<svg style="left:549.0px;top:45.0px;" width="18" height="18" viewBox="0 0 18 18"><path d="M2,16 L3,11.5 L13,1.5 L16.5,5 L6.5,15 Z M11,3.5 L14.5,7" fill="none" stroke="#eee" stroke-width="1.3"/></svg>
<svg style="left:645.0px;top:46.0px;" width="16" height="16" viewBox="0 0 16 16"><path d="M1,7 V15 H12 V12 M4.5,10.5 C4.5,6 8,5 11.5,5 V2 L15.5,6 L11.5,10 V7.3 C8.7,7.3 6.3,8.2 4.5,10.5" fill="none" stroke="#eee" stroke-width="1.2"/></svg>
<svg style="left:18.5px;top:80.6px;" width="26" height="33" viewBox="0 0 26 33"><path d="M1,1 H15 L25,11 V32 H1 Z M15,1 V11 H25" fill="none" stroke="#d8d8d8" stroke-width="1.4"/><g stroke="#d8d8d8" stroke-width="1.2"><line x1="4" y1="10" x2="11" y2="10"/><line x1="4" y1="14" x2="20" y2="14"/><line x1="4" y1="18" x2="16" y2="18"/></g></svg>
<svg style="left:55.7px;top:94.8px" width="7" height="3.5"><polyline points="0,0 3.5,3.5 7,0" fill="none" stroke="#e6e6e6" stroke-width="1.4"/></svg>
<div class="t" style="left:37.8px;top:121.6px;font-size:12.3px;color:#ececec;font-weight:bold;transform:translateX(-50%) scaleX(0.93);transform-origin:50% 0;">Pages</div>
<div class="a" style="left:77.7px;top:80.6px;width:1px;height:70.0px;background:#464646"></div>
<svg style="left:93.7px;top:80.6px;" width="33" height="33" viewBox="0 0 33 33"><rect x="1" y="1" width="31" height="31" fill="none" stroke="#d8d8d8" stroke-width="1.4"/><g stroke="#d8d8d8" stroke-width="1.2"><line x1="1" y1="4.5" x2="32" y2="4.5"/><line x1="1" y1="12" x2="32" y2="12"/><line x1="1" y1="19" x2="32" y2="19"/><line x1="1" y1="25.5" x2="32" y2="25.5"/><line x1="11" y1="4.5" x2="11" y2="32"/><line x1="22" y1="4.5" x2="22" y2="32"/></g></svg>
<svg style="left:134.0px;top:94.8px" width="7" height="3.5"><polyline points="0,0 3.5,3.5 7,0" fill="none" stroke="#e6e6e6" stroke-width="1.4"/></svg>
<div class="t" style="left:116.8px;top:121.6px;font-size:12.3px;color:#ececec;font-weight:bold;transform:translateX(-50%) scaleX(0.93);transform-origin:50% 0;">Table</div>
<div class="a" style="left:156.3px;top:80.6px;width:1px;height:70.0px;background:#464646"></div>
<svg style="left:180.0px;top:80.6px;" width="34" height="34" viewBox="0 0 34 34"><rect x="1" y="1" width="20" height="20" fill="#1d74d8"/><circle cx="21" cy="22" r="10.5" fill="#2b2b2b" stroke="#e0e0e0" stroke-width="1.5"/></svg>
<svg style="left:220.0px;top:94.8px" width="7" height="3.5"><polyline points="0,0 3.5,3.5 7,0" fill="none" stroke="#e6e6e6" stroke-width="1.4"/></svg>
<div class="t" style="left:203.6px;top:121.6px;font-size:12.3px;color:#ececec;font-weight:bold;transform:translateX(-50%) scaleX(0.93);transform-origin:50% 0;">Illustrations</div>
<div class="a" style="left:252.0px;top:80.6px;width:1px;height:70.0px;background:#464646"></div>
<svg style="left:268.0px;top:80.6px;" width="36" height="34" viewBox="0 0 36 34"><rect x="1" y="4" width="30" height="24" fill="none" stroke="#d8d8d8" stroke-width="1.4"/><g fill="#d8d8d8"><rect x="3.5" y="7" width="2" height="2.5"/><rect x="3.5" y="13" width="2" height="2.5"/><rect x="3.5" y="19" width="2" height="2.5"/><rect x="26.5" y="7" width="2" height="2.5"/><rect x="26.5" y="12" width="2" height="2"/></g><line x1="7.5" y1="4" x2="7.5" y2="28" stroke="#d8d8d8" stroke-width="1.1"/><line x1="24.5" y1="4" x2="24.5" y2="16" stroke="#d8d8d8" stroke-width="1.1"/><circle cx="27" cy="26" r="7.5" fill="#2b2b2b" stroke="#2f8fe0" stroke-width="1.4"/><path d="M19.5,26 H34.5 M27,18.5 V33.5 M27,18.5 C23,22 23,30 27,33.5 M27,18.5 C31,22 31,30 27,33.5" fill="none" stroke="#2f8fe0" stroke-width="1.1"/></svg>
<svg style="left:307.8px;top:94.8px" width="7" height="3.5"><polyline points="0,0 3.5,3.5 7,0" fill="none" stroke="#e6e6e6" stroke-width="1.4"/></svg>
<div class="t" style="left:290.0px;top:121.6px;font-size:12.3px;color:#ececec;font-weight:bold;transform:translateX(-50%) scaleX(0.93);transform-origin:50% 0;">Media</div>
<div class="a" style="left:330.2px;top:80.6px;width:1px;height:70.0px;background:#464646"></div>
<svg style="left:347.0px;top:84.0px;" width="32" height="25" viewBox="0 0 32 25"><rect x="1" y="1" width="20" height="13" rx="6.5" fill="none" stroke="#d8d8d8" stroke-width="1.4"/><rect x="10.5" y="10.5" width="20" height="13" rx="6.5" fill="none" stroke="#d8d8d8" stroke-width="1.4"/></svg>
<svg style="left:386.0px;top:94.8px" width="7" height="3.5"><polyline points="0,0 3.5,3.5 7,0" fill="none" stroke="#e6e6e6" stroke-width="1.4"/></svg>
<div class="t" style="left:368.6px;top:121.6px;font-size:12.3px;color:#ececec;font-weight:bold;transform:translateX(-50%) scaleX(0.93);transform-origin:50% 0;">Links</div>
<div class="a" style="left:408.4px;top:80.6px;width:1px;height:70.0px;background:#464646"></div>
<svg style="left:430.7px;top:78.0px;" width="36" height="36" viewBox="0 0 36 36"><path d="M4,6 H34 V27 H14 L8,33 V27 H4 Z" fill="none" stroke="#d8d8d8" stroke-width="1.4"/><path d="M8,0 V14 M1,7 H15" stroke="#25c160" stroke-width="1.7"/></svg>
<div class="t" style="left:450.0px;top:121.6px;font-size:12.3px;color:#ececec;font-weight:bold;transform:translateX(-50%) scaleX(0.93);transform-origin:50% 0;">Comment</div>
<div class="a" style="left:493.0px;top:80.6px;width:1px;height:70.0px;background:#464646"></div>
<svg style="left:512.7px;top:80.6px;" width="27" height="33" viewBox="0 0 27 33"><path d="M1,1 H16 L26,11 V32 H1 Z M16,1 V11 H26" fill="none" stroke="#d8d8d8" stroke-width="1.4"/><rect x="4" y="6" width="9" height="4" fill="#f09a2a"/></svg>
<svg style="left:550.0px;top:94.8px" width="7" height="3.5"><polyline points="0,0 3.5,3.5 7,0" fill="none" stroke="#e6e6e6" stroke-width="1.4"/></svg>
<div class="t" style="left:534.0px;top:121.6px;font-size:12.3px;color:#ececec;font-weight:bold;transform:translateX(-50%) scaleX(0.93);transform-origin:50% 0;">Header &amp;</div>
<div class="t" style="left:534.0px;top:134.6px;font-size:12.3px;color:#ececec;font-weight:bold;transform:translateX(-50%) scaleX(0.93);transform-origin:50% 0;">Footer</div>
<div class="a" style="left:576.0px;top:80.6px;width:1px;height:70.0px;background:#464646"></div>
<svg style="left:594.6px;top:79.0px;" width="31" height="34" viewBox="0 0 31 34"><path d="M1,20 L28,2 L21,32 M8,16 L23,21" fill="none" stroke="#1ea5f0" stroke-width="2.3" stroke-linejoin="round"/></svg>
<svg style="left:631.0px;top:94.8px" width="7" height="3.5"><polyline points="0,0 3.5,3.5 7,0" fill="none" stroke="#e6e6e6" stroke-width="1.4"/></svg>
<div class="t" style="left:614.0px;top:121.6px;font-size:12.3px;color:#ececec;font-weight:bold;transform:translateX(-50%) scaleX(0.93);transform-origin:50% 0;">Text</div>
<div class="a" style="left:654.2px;top:80.6px;width:1px;height:70.0px;background:#464646"></div>
<svg style="left:669.9px;top:82.0px;" width="31" height="30" viewBox="0 0 31 30"><path d="M2,29 H11 V26 C4,23 2,17 2,13 A13.5,13 0 0 1 29,13 C29,17 27,23 20,26 V29 H29" fill="none" stroke="#d8d8d8" stroke-width="1.4"/></svg>
<div class="t" style="left:669.0px;top:121.6px;font-size:12.3px;color:#ececec;font-weight:bold;transform:scaleX(0.93);transform-origin:0 0;">Symbol</div>
<div class="a" style="left:707.0px;top:74.0px;width:17.0px;height:80.0px;background:#0c0c0c;"></div>
<svg style="left:711.0px;top:112.0px;" width="8" height="9" viewBox="0 0 8 9"><path d="M0,0 L7,4.5 L0,9 Z" fill="#9a9a9a"/></svg>
<div class="a" style="left:0.0px;top:155.0px;width:724.0px;height:935.0px;background:#2b2b2b;"></div>
<div class="a" style="left:17.0px;top:155.0px;width:677.0px;height:922.5px;background:#ffffff;"></div>
<div class="a" style="left:694.0px;top:155.0px;width:30.0px;height:935.0px;background:#2a2a2a;"></div>
<div class="a" style="left:706.5px;top:155.0px;width:13.5px;height:930.0px;background:#333333;"></div>
<div class="a" style="left:709.0px;top:772.5px;width:10.0px;height:21.5px;background:linear-gradient(#a5a5a5,#8f8f8f);border-radius:5px;box-shadow:0 0 0 1px #2a2a2a"></div>
<div class="a" style="left:3.0px;top:1090.0px;width:705.0px;height:13.0px;background:#242424;"></div>
<div class="a" style="left:5.0px;top:1092.0px;width:687.5px;height:9.0px;background:#999999;border-radius:5px"></div>
<div class="a" style="left:0.0px;top:1105.0px;width:724.0px;height:2.0px;background:#1a1a1a;"></div>
<div class="a" style="left:0.0px;top:1107.0px;width:724.0px;height:25.0px;background:linear-gradient(#4a4a4a,#3d3d3d);"></div>
<div class="t" style="left:28.0px;top:1112.9px;font-size:13.5px;color:#e2e2e2;transform:scaleX(1.02);transform-origin:0 0;">Page 71 of 104</div>
<svg style="left:242.0px;top:1112.0px;" width="17" height="14" viewBox="0 0 17 14"><path d="M1,4 V1 H5 M12,1 H16 V4 M16,10 V13 H12 M5,13 H1 V10" fill="none" stroke="#ddd" stroke-width="1.3"/><rect x="3.5" y="3.5" width="10" height="7" fill="none" stroke="#ddd" stroke-width="1"/></svg>
<div class="t" style="left:269.0px;top:1112.9px;font-size:13.5px;color:#e2e2e2;transform:scaleX(0.97);transform-origin:0 0;">Focus</div>
<div class="a" style="left:321.0px;top:1106.0px;width:37.5px;height:26.0px;background:#555555;"></div>
<svg style="left:331.0px;top:1111.0px;" width="17" height="15" viewBox="0 0 17 15"><rect x="1" y="1" width="15" height="13" fill="none" stroke="#eee" stroke-width="1.2"/><g stroke="#eee"><line x1="3.5" y1="4" x2="13.5" y2="4"/><line x1="3.5" y1="6.5" x2="13.5" y2="6.5"/><line x1="3.5" y1="9" x2="13.5" y2="9"/><line x1="3.5" y1="11.5" x2="13.5" y2="11.5"/></g></svg>
<svg style="left:371.0px;top:1111.0px;" width="19" height="18" viewBox="0 0 19 18"><rect x="1" y="1" width="14" height="12" fill="none" stroke="#ddd" stroke-width="1.2"/><g stroke="#ddd"><line x1="3.5" y1="4" x2="12" y2="4"/><line x1="3.5" y1="7" x2="10" y2="7"/></g><circle cx="14" cy="13" r="4.5" fill="#ddd"/></svg>
<svg style="left:411.0px;top:1112.0px;" width="19" height="14" viewBox="0 0 19 14"><g stroke="#ddd" stroke-width="1.2"><line x1="1" y1="1" x2="6" y2="1"/><line x1="6" y1="4.5" x2="18" y2="4.5"/><line x1="6" y1="8.5" x2="18" y2="8.5"/><line x1="3" y1="12.5" x2="18" y2="12.5"/></g></svg>
<svg style="left:451.0px;top:1112.0px;" width="18" height="14" viewBox="0 0 18 14"><g stroke="#ddd" stroke-width="1.3"><line x1="1" y1="1" x2="17" y2="1"/><line x1="1" y1="4.7" x2="17" y2="4.7"/><line x1="1" y1="8.4" x2="17" y2="8.4"/><line x1="1" y1="12.1" x2="12" y2="12.1"/></g></svg>
<div class="a" style="left:491.5px;top:1118.5px;width:9.0px;height:2.0px;background:#eee;"></div>
<div class="a" style="left:508.0px;top:1116.5px;width:114.0px;height:6.0px;background:#6b6b6b;border-radius:3px"></div>
<div class="a" style="left:555.0px;top:1111.0px;width:20.0px;height:16.0px;background:#dcdcdc;border-radius:8px"></div>
<svg style="left:630.0px;top:1114.0px;" width="10" height="10" viewBox="0 0 10 10"><path d="M5,0 V10 M0,5 H10" stroke="#eee" stroke-width="1.8"/></svg>
<div class="t" style="left:659.5px;top:1112.9px;font-size:13.5px;color:#e2e2e2;transform:scaleX(0.97);transform-origin:0 0;">100%</div>
<div class="t" style="left:99.3px;top:206.0px;font-size:13.65px;color:#000;font-family:'Liberation Serif',serif;-webkit-text-stroke:0.25px #000;"><b>Table 13.11</b></div>
<div class="t" style="left:99.3px;top:233.2px;font-size:13.65px;color:#000;font-family:'Liberation Serif',serif;-webkit-text-stroke:0.25px #000;"><i>The mean scores for irrational thought levels as a function of group type and time of</i></div>
<div class="t" style="left:99.3px;top:251.5px;font-size:13.65px;color:#000;font-family:'Liberation Serif',serif;-webkit-text-stroke:0.25px #000;"><i>intervention.</i></div>
<div class="a" style="left:99.3px;top:278.3px;width:505.4px;height:1.3px;background:#222;"></div>
<div class="a" style="left:99.3px;top:329.3px;width:505.4px;height:1.3px;background:#222;"></div>
<div class="a" style="left:99.3px;top:378.1px;width:505.4px;height:1.3px;background:#222;"></div>
<div class="a" style="left:99.3px;top:426.4px;width:505.4px;height:1.3px;background:#222;"></div>
<div class="t" style="left:102.6px;top:299.9px;font-size:13.65px;color:#000;font-family:'Liberation Serif',serif;-webkit-text-stroke:0.25px #000;"><b>Group type</b></div>
<div class="t" style="left:280.7px;top:299.9px;font-size:13.65px;color:#000;font-family:'Liberation Serif',serif;transform:translateX(-50%) ;transform-origin:50% 0;-webkit-text-stroke:0.25px #000;"><b>Time of intervention</b></div>
<div class="t" style="left:430.3px;top:299.9px;font-size:13.65px;color:#000;font-family:'Liberation Serif',serif;transform:translateX(-50%) ;transform-origin:50% 0;-webkit-text-stroke:0.25px #000;"><b>Media</b></div>
<div class="t" style="left:551.0px;top:299.9px;font-size:13.65px;color:#000;font-family:'Liberation Serif',serif;transform:translateX(-50%) ;transform-origin:50% 0;-webkit-text-stroke:0.25px #000;"><b>SD</b></div>
<div class="t" style="left:280.7px;top:332.7px;font-size:13.65px;color:#000;font-family:'Liberation Serif',serif;transform:translateX(-50%) ;transform-origin:50% 0;-webkit-text-stroke:0.25px #000;"><b>Pretest</b></div>
<div class="t" style="left:430.3px;top:332.7px;font-size:13.65px;color:#000;font-family:'Liberation Serif',serif;transform:translateX(-50%) ;transform-origin:50% 0;-webkit-text-stroke:0.25px #000;">117.22</div>
<div class="t" style="left:551.0px;top:332.7px;font-size:13.65px;color:#000;font-family:'Liberation Serif',serif;transform:translateX(-50%) ;transform-origin:50% 0;-webkit-text-stroke:0.25px #000;">2.49</div>
<div class="t" style="left:280.7px;top:349.4px;font-size:13.65px;color:#000;font-family:'Liberation Serif',serif;transform:translateX(-50%) ;transform-origin:50% 0;-webkit-text-stroke:0.25px #000;"><b>Posttest</b></div>
<div class="t" style="left:430.3px;top:349.4px;font-size:13.65px;color:#000;font-family:'Liberation Serif',serif;transform:translateX(-50%) ;transform-origin:50% 0;-webkit-text-stroke:0.25px #000;">116.78</div>
<div class="t" style="left:551.0px;top:349.4px;font-size:13.65px;color:#000;font-family:'Liberation Serif',serif;transform:translateX(-50%) ;transform-origin:50% 0;-webkit-text-stroke:0.25px #000;">2.22</div>
<div class="t" style="left:280.7px;top:365.4px;font-size:13.65px;color:#000;font-family:'Liberation Serif',serif;transform:translateX(-50%) ;transform-origin:50% 0;-webkit-text-stroke:0.25px #000;"><b>Follow up</b></div>
<div class="t" style="left:430.3px;top:365.4px;font-size:13.65px;color:#000;font-family:'Liberation Serif',serif;transform:translateX(-50%) ;transform-origin:50% 0;-webkit-text-stroke:0.25px #000;">118.22</div>
<div class="t" style="left:551.0px;top:365.4px;font-size:13.65px;color:#000;font-family:'Liberation Serif',serif;transform:translateX(-50%) ;transform-origin:50% 0;-webkit-text-stroke:0.25px #000;">2.33</div>
<div class="t" style="left:280.7px;top:381.4px;font-size:13.65px;color:#000;font-family:'Liberation Serif',serif;transform:translateX(-50%) ;transform-origin:50% 0;-webkit-text-stroke:0.25px #000;"><b>Pretest</b></div>
<div class="t" style="left:430.3px;top:381.4px;font-size:13.65px;color:#000;font-family:'Liberation Serif',serif;transform:translateX(-50%) ;transform-origin:50% 0;-webkit-text-stroke:0.25px #000;">118.12</div>
<div class="t" style="left:551.0px;top:381.4px;font-size:13.65px;color:#000;font-family:'Liberation Serif',serif;transform:translateX(-50%) ;transform-origin:50% 0;-webkit-text-stroke:0.25px #000;">2.80</div>
<div class="t" style="left:280.7px;top:397.4px;font-size:13.65px;color:#000;font-family:'Liberation Serif',serif;transform:translateX(-50%) ;transform-origin:50% 0;-webkit-text-stroke:0.25px #000;"><b>Posttest</b></div>
<div class="t" style="left:430.3px;top:397.4px;font-size:13.65px;color:#000;font-family:'Liberation Serif',serif;transform:translateX(-50%) ;transform-origin:50% 0;-webkit-text-stroke:0.25px #000;">113.13</div>
<div class="t" style="left:551.0px;top:397.4px;font-size:13.65px;color:#000;font-family:'Liberation Serif',serif;transform:translateX(-50%) ;transform-origin:50% 0;-webkit-text-stroke:0.25px #000;">2.10</div>
<div class="t" style="left:280.7px;top:413.7px;font-size:13.65px;color:#000;font-family:'Liberation Serif',serif;transform:translateX(-50%) ;transform-origin:50% 0;-webkit-text-stroke:0.25px #000;"><b>Follow up</b></div>
<div class="t" style="left:430.3px;top:413.7px;font-size:13.65px;color:#000;font-family:'Liberation Serif',serif;transform:translateX(-50%) ;transform-origin:50% 0;-webkit-text-stroke:0.25px #000;">112.37</div>
<div class="t" style="left:551.0px;top:413.7px;font-size:13.65px;color:#000;font-family:'Liberation Serif',serif;transform:translateX(-50%) ;transform-origin:50% 0;-webkit-text-stroke:0.25px #000;">2.20</div>
<div class="t" style="left:102.6px;top:348.7px;font-size:13.65px;color:#000;font-family:'Liberation Serif',serif;-webkit-text-stroke:0.25px #000;"><b>control</b></div>
<div class="t" style="left:102.6px;top:397.4px;font-size:13.65px;color:#000;font-family:'Liberation Serif',serif;-webkit-text-stroke:0.25px #000;"><b>experimental</b></div>
<div class="t" style="left:140.2px;top:461.1px;font-size:13.65px;color:#000;font-family:'Liberation Serif',serif;-webkit-text-stroke:0.25px #000;"><div style="width:471.90000000000003px;text-align:justify;text-align-last:justify;word-spacing:-2px;">Thus, from <i>Table 3.11</i> we can observe that the intervention program was effective for</div></div>
<div class="t" style="left:99.3px;top:492.4px;font-size:13.65px;color:#000;font-family:'Liberation Serif',serif;-webkit-text-stroke:0.25px #000;"><div style="width:512.8px;text-align:justify;text-align-last:justify;word-spacing:-2px;">the subjects in the experimental group (M = 113.13, SD = 2.10), who recorded a lower mean</div></div>
<div class="t" style="left:99.3px;top:523.7px;font-size:13.65px;color:#000;font-family:'Liberation Serif',serif;-webkit-text-stroke:0.25px #000;"><div style="width:512.8px;text-align:justify;text-align-last:justify;word-spacing:-2px;">score for irrational thoughts in the post-test period compared to the mean irrational-thought</div></div>
<div class="t" style="left:99.3px;top:555.1px;font-size:13.65px;color:#000;font-family:'Liberation Serif',serif;-webkit-text-stroke:0.25px #000;"><div style="width:512.8px;text-align:justify;text-align-last:justify;word-spacing:-2px;">score of the older subjects in the control group (M = 116.78, SD = 2.22), results that are in line</div></div>
<div class="t" style="left:99.3px;top:586.4px;font-size:13.65px;color:#000;font-family:'Liberation Serif',serif;-webkit-text-stroke:0.25px #000;"><div style="width:512.8px;text-align:justify;text-align-last:justify;word-spacing:-2px;">with our expectations. In the follow-up period, the participants in the experimental group</div></div>
<div class="t" style="left:99.3px;top:617.7px;font-size:13.65px;color:#000;font-family:'Liberation Serif',serif;-webkit-text-stroke:0.25px #000;"><div style="width:512.8px;text-align:justify;text-align-last:justify;word-spacing:-2px;">recorded a mean score for irrational thoughts of M = 112.37, SD = 2.20, which was lower the</div></div>
<div class="t" style="left:99.3px;top:649.0px;font-size:13.65px;color:#000;font-family:'Liberation Serif',serif;-webkit-text-stroke:0.25px #000;"><div style="width:512.8px;text-align:justify;text-align-last:justify;word-spacing:-2px;">mean irrational-thought score of the older adults in the control group (M = 118.22, SD = 2.33).</div></div>
<div class="t" style="left:99.3px;top:680.4px;font-size:13.65px;color:#000;font-family:'Liberation Serif',serif;-webkit-text-stroke:0.25px #000;"><b>Figure 3.3.</b></div>
<div class="t" style="left:99.3px;top:707.7px;font-size:13.65px;color:#000;font-family:'Liberation Serif',serif;-webkit-text-stroke:0.25px #000;"><i>The means for the level of irrational beliefs as a function of group type and intervention time</i></div>
<svg style="left:99.3px;top:736.8px;" width="563" height="221" viewBox="0 0 563 221"><rect x="0.5" y="0.5" width="562" height="219.5" fill="#fff" stroke="#d4d4d4" stroke-width="1"/><line x1="65.19999999999999" y1="42.100000000000136" x2="549.3" y2="42.100000000000136" stroke="#d9d9d9" stroke-width="1.2"/><text x="53.19999999999999" y="46.70000000000014" text-anchor="end" font-size="13.3" font-weight="bold" fill="#595959" font-family="Liberation Serif">120</text><line x1="65.19999999999999" y1="65.90000000000009" x2="549.3" y2="65.90000000000009" stroke="#d9d9d9" stroke-width="1.2"/><text x="53.19999999999999" y="70.50000000000009" text-anchor="end" font-size="13.3" font-weight="bold" fill="#595959" font-family="Liberation Serif">118</text><line x1="65.19999999999999" y1="89.40000000000009" x2="549.3" y2="89.40000000000009" stroke="#d9d9d9" stroke-width="1.2"/><text x="53.19999999999999" y="94.00000000000009" text-anchor="end" font-size="13.3" font-weight="bold" fill="#595959" font-family="Liberation Serif">116</text><line x1="65.19999999999999" y1="113.20000000000005" x2="549.3" y2="113.20000000000005" stroke="#d9d9d9" stroke-width="1.2"/><text x="53.19999999999999" y="117.80000000000004" text-anchor="end" font-size="13.3" font-weight="bold" fill="#595959" font-family="Liberation Serif">114</text><line x1="65.19999999999999" y1="136.70000000000005" x2="549.3" y2="136.70000000000005" stroke="#d9d9d9" stroke-width="1.2"/><text x="53.19999999999999" y="141.30000000000004" text-anchor="end" font-size="13.3" font-weight="bold" fill="#595959" font-family="Liberation Serif">112</text><line x1="65.19999999999999" y1="160.20000000000005" x2="549.3" y2="160.20000000000005" stroke="#d9d9d9" stroke-width="1.2"/><text x="53.19999999999999" y="164.80000000000004" text-anchor="end" font-size="13.3" font-weight="bold" fill="#595959" font-family="Liberation Serif">110</text><text transform="translate(26.69999999999999,95.20000000000005) rotate(-90)" text-anchor="middle" font-size="13.3" font-weight="bold" fill="#595959" font-family="Liberation Serif">Nivel satisfacție cu viața</text><text x="145.2" y="180.60000000000014" text-anchor="middle" font-size="13.4" font-weight="bold" fill="#595959" font-family="Liberation Serif">Pretest</text><text x="307.2" y="180.60000000000014" text-anchor="middle" font-size="13.4" font-weight="bold" fill="#595959" font-family="Liberation Serif">Posttest</text><text x="468.09999999999997" y="180.60000000000014" text-anchor="middle" font-size="13.4" font-weight="bold" fill="#595959" font-family="Liberation Serif">Follow up</text><polyline points="144.5,74.8 307.2,80.1 469.3,63.3" fill="none" stroke="#3070cf" stroke-width="3.7" stroke-linecap="round" stroke-linejoin="round"/><polyline points="144.5,64.4 307.2,123.2 469.3,132.6" fill="none" stroke="#f47b20" stroke-width="3.7" stroke-linecap="round" stroke-linejoin="round"/><text x="139.7" y="61.0" text-anchor="middle" font-size="11.3" font-weight="bold" fill="#f47b20" font-family="Liberation Serif">118,12</text><text x="134.39999999999998" y="91.5" text-anchor="middle" font-size="11.3" font-weight="bold" fill="#3070cf" font-family="Liberation Serif">117,22</text><text x="300.7" y="75.90000000000009" text-anchor="middle" font-size="11.3" font-weight="bold" fill="#3070cf" font-family="Liberation Serif">116,78</text><text x="465.49999999999994" y="59.100000000000136" text-anchor="middle" font-size="11.3" font-weight="bold" fill="#3070cf" font-family="Liberation Serif">118,22</text><text x="308.40000000000003" y="141.0" text-anchor="middle" font-size="11.3" font-weight="bold" fill="#f47b20" font-family="Liberation Serif">113,13</text><text x="465.49999999999994" y="148.10000000000014" text-anchor="middle" font-size="11.3" font-weight="bold" fill="#f47b20" font-family="Liberation Serif">112,37</text><line x1="153.7" y1="201.5" x2="177.7" y2="201.5" stroke="#3070cf" stroke-width="3.7" stroke-linecap="round"/><text x="179.49999999999994" y="206.20000000000005" font-size="13.4" font-weight="bold" fill="#595959" font-family="Liberation Serif">Grup control</text><line x1="274.7" y1="201.5" x2="297.7" y2="201.5" stroke="#f47b20" stroke-width="3.7" stroke-linecap="round"/><text x="299.09999999999997" y="206.20000000000005" font-size="13.4" font-weight="bold" fill="#595959" font-family="Liberation Serif">Grup experimental</text></svg>
<div class="t" style="left:99.3px;top:960.4px;font-size:13.65px;color:#000;font-family:'Liberation Serif',serif;-webkit-text-stroke:0.25px #000;"><b><i>Note</i></b>. Graph illustrating the data from Table 3.11.</div>
<div class="t" style="left:355.5px;top:1025.7px;font-size:11px;color:#555;transform:translateX(-50%) ;transform-origin:50% 0;">71</div>

</div>
<div id="w2" class="a" style="left:1116px;top:516px;width:729px;height:1128px;background:#2b2b2b;border-radius:20px;overflow:hidden;box-shadow:0 0 0 1px #5a5a5a, 0 12px 45px rgba(20,25,35,.55)">
<div class="a" style="left:0.0px;top:0.0px;width:729.0px;height:36.0px;background:#242424;"></div>
<div class="a" style="left:0.0px;top:155.0px;width:729.0px;height:2.0px;background:#141414;"></div>
<div class="a" style="left:13.6px;top:14.7px;width:16.0px;height:16.0px;background:#fe5f57;border-radius:8px"></div>
<div class="a" style="left:40.0px;top:14.7px;width:16.0px;height:16.0px;background:#febc2e;border-radius:8px"></div>
<div class="a" style="left:66.4px;top:14.7px;width:16.0px;height:16.0px;background:#28c840;border-radius:8px"></div>
<div class="a" style="left:18.6px;top:19.7px;width:6.0px;height:6.0px;background:#9a2a25;border-radius:3px"></div>
<div class="t" style="left:114.8px;top:16.7px;font-size:12.5px;color:#e0e0e0;font-weight:bold;transform:scaleX(0.99);transform-origin:0 0;">AutoSave</div>
<div class="a" style="left:183.5px;top:15.5px;width:45.3px;height:15.0px;background:#d8d8d8;border-radius:8px"></div>
<div class="t" style="left:192.0px;top:18.9px;font-size:8.5px;color:#333;font-weight:bold;">ON</div>
<div class="a" style="left:214.5px;top:16.0px;width:14.0px;height:14.0px;background:#ffffff;border-radius:7px;box-shadow:0 0 1px #666"></div>
<svg style="left:243.0px;top:14.0px;" width="18" height="18" viewBox="0 0 18 18"><path d="M1.5,8.5 L9,1.5 L16.5,8.5 M3.5,7 V16.5 H7 V11 H11 V16.5 H14.5 V7" fill="none" stroke="#e6e6e6" stroke-width="1.5"/></svg>
<svg style="left:274.0px;top:14.0px;" width="20" height="19" viewBox="0 0 20 19"><path d="M1,1 H13 L16,4 V16 H1 Z M4.5,1 V6 H12 V1 M4,16 V10 H10" fill="none" stroke="#e6e6e6" stroke-width="1.4"/><circle cx="15" cy="14" r="4.8" fill="#e6e6e6"/><path d="M12.8,13.5 A2.3,2.3 0 0 1 17,13 M17.2,14.5 A2.3,2.3 0 0 1 13,15" stroke="#222" fill="none" stroke-width="1.1"/></svg>
<svg style="left:306.6px;top:14.0px;" width="18" height="18" viewBox="0 0 18 18"><path d="M2,1 V7.5 H8.5 M2.4,7.2 A7,7 0 1 1 7,17" fill="none" stroke="#e6e6e6" stroke-width="1.5"/></svg>
<svg style="left:332.6px;top:22.2px" width="7" height="3.5"><polyline points="0,0 3.5,3.5 7,0" fill="none" stroke="#e6e6e6" stroke-width="1.4"/></svg>
<svg style="left:352.0px;top:14.0px;" width="18" height="18" viewBox="0 0 18 18"><path d="M14.5,4 A7.3,7.3 0 1 0 16.5,9 M16.5,1 V5.5 H12" fill="none" stroke="#e6e6e6" stroke-width="1.5"/></svg>
<svg style="left:382.0px;top:14.0px;" width="19" height="17" viewBox="0 0 19 17"><path d="M4,6 V1 H15 V6 M4,12 H1 V6 H18 V12 H15 M4,9 H15 V16 H4 Z" fill="none" stroke="#e6e6e6" stroke-width="1.4"/></svg>
<svg style="left:414.0px;top:21.0px;" width="15" height="4" viewBox="0 0 15 4"><circle cx="2" cy="2" r="1.7" fill="#e6e6e6"/><circle cx="7.5" cy="2" r="1.7" fill="#e6e6e6"/><circle cx="13" cy="2" r="1.7" fill="#e6e6e6"/></svg>
<svg style="left:447.0px;top:14.0px;" width="16" height="17" viewBox="0 0 16 17"><rect x="3" y="0" width="13" height="16" rx="1.5" fill="#e9eefc"/><rect x="5" y="2" width="9" height="12" fill="#5b8cf0" opacity=".5"/><rect x="0" y="8" width="8" height="9" rx="1" fill="#2a5cc9"/><text x="0.8" y="15.5" font-size="7.5" font-weight="bold" fill="#fff" font-family="Liberation Sans">W</text></svg>
<div class="t" style="left:469.0px;top:15.3px;font-size:15px;color:#f4f4f4;font-weight:bold;transform:scaleX(1.026);transform-origin:0 0;">How to Cite A... <span style="color:#c8c8c8">— Saving...</span></div>
<svg style="left:672.0px;top:20.8px" width="9" height="4.5"><polyline points="0,0 4.5,4.5 9,0" fill="none" stroke="#9a9a9a" stroke-width="1.2"/></svg>
<svg style="left:698.0px;top:14.0px;" width="18" height="18" viewBox="0 0 18 18"><circle cx="7" cy="7" r="5.8" fill="none" stroke="#e6e6e6" stroke-width="1.5"/><line x1="11.2" y1="11.2" x2="17" y2="17" stroke="#e6e6e6" stroke-width="1.6"/></svg>
<div class="t" style="left:12.9px;top:46.2px;font-size:14.5px;color:#ffffff;font-weight:bold;">Home</div>
<div class="t" style="left:82.7px;top:46.2px;font-size:14.5px;color:#e4e4e4;font-weight:bold;">Insert</div>
<div class="t" style="left:152.5px;top:46.2px;font-size:14.5px;color:#e4e4e4;font-weight:bold;">Draw</div>
<div class="t" style="left:216.7px;top:46.2px;font-size:14.5px;color:#e4e4e4;font-weight:bold;">Design</div>
<div class="t" style="left:294.0px;top:46.2px;font-size:14.5px;color:#e4e4e4;font-weight:bold;">Layout</div>
<svg style="left:359.4px;top:48.0px;" width="14" height="11" viewBox="0 0 14 11"><path d="M1,1 L5.5,5.5 L1,10 M7.5,1 L12,5.5 L7.5,10" fill="none" stroke="#e4e4e4" stroke-width="1.6"/></svg>
<div class="a" style="left:13.0px;top:64.5px;width:43.0px;height:3.5px;background:#e8e8e8;border-radius:2px"></div>
<div class="a" style="left:424.4px;top:41.2px;width:110.2px;height:27.2px;background:#5f5f5f;border-radius:4px"></div>
<div class="t" style="left:454.5px;top:48.2px;font-size:14px;color:#f2f2f2;font-weight:bold;">Comments</div>
<div class="a" style="left:546.0px;top:41.2px;width:84.0px;height:27.2px;background:#5f5f5f;border-radius:4px"></div>
<div class="t" style="left:576.0px;top:48.2px;font-size:14px;color:#f2f2f2;font-weight:bold;transform:scaleX(0.98);transform-origin:0 0;">Editing</div>
<div class="a" style="left:641.4px;top:41.2px;width:76.6px;height:27.2px;background:#5f5f5f;border-radius:4px"></div>
<div class="t" style="left:671.6px;top:48.2px;font-size:14px;color:#f2f2f2;font-weight:bold;transform:scaleX(0.99);transform-origin:0 0;">Share</div>
<svg style="left:433.5px;top:47.5px;" width="15" height="15" viewBox="0 0 15 15"><path d="M1,1 H14 V10 H6 L3,13.5 V10 H1 Z" fill="none" stroke="#eee" stroke-width="1.3"/></svg>
<svg style="left:554.0px;top:45.5px;" width="18" height="18" viewBox="0 0 18 18"><path d="M2,16 L3,11.5 L13,1.5 L16.5,5 L6.5,15 Z M11,3.5 L14.5,7" fill="none" stroke="#eee" stroke-width="1.3"/></svg>
<svg style="left:650.0px;top:46.5px;" width="16" height="16" viewBox="0 0 16 16"><path d="M1,7 V15 H12 V12 M4.5,10.5 C4.5,6 8,5 11.5,5 V2 L15.5,6 L11.5,10 V7.3 C8.7,7.3 6.3,8.2 4.5,10.5" fill="none" stroke="#eee" stroke-width="1.2"/></svg>
<svg style="left:18.5px;top:80.5px;" width="34" height="36" viewBox="0 0 34 36"><path d="M2,6 H8 M22,6 H25 V18" fill="none" stroke="#f2a500" stroke-width="2.4"/><path d="M2,5 V29 H12" fill="none" stroke="#f2a500" stroke-width="2.8"/><path d="M7,6 H11 A3,3 0 0 1 17,6 H21 V10 H7 Z" fill="none" stroke="#d0d0d0" stroke-width="1.2"/><rect x="13" y="13.5" width="19" height="21" fill="#2b2b2b" stroke="#d0d0d0" stroke-width="1.4"/></svg>
<svg style="left:56.0px;top:95.2px" width="7" height="3.5"><polyline points="0,0 3.5,3.5 7,0" fill="none" stroke="#e6e6e6" stroke-width="1.4"/></svg>
<div class="t" style="left:38.5px;top:121.3px;font-size:12.3px;color:#ececec;font-weight:bold;transform:translateX(-50%) scaleX(0.93);transform-origin:50% 0;">Paste</div>
<svg style="left:76.3px;top:79.0px;" width="12" height="18" viewBox="0 0 12 18"><path d="M2,0 L9.5,12 M10,0 L2.5,12" stroke="#8a8a8a" stroke-width="1" fill="none"/><circle cx="3" cy="14.5" r="2.3" fill="none" stroke="#3f7fb5" stroke-width="1.1"/><circle cx="9" cy="14.5" r="2.3" fill="none" stroke="#3f7fb5" stroke-width="1.1"/></svg>
<svg style="left:71.0px;top:103.5px;" width="21" height="19" viewBox="0 0 21 19"><path d="M1,1 H7 L8,2 V14 H1 Z" fill="none" stroke="#6e6e6e" stroke-width="1"/><path d="M7,5 H14 L19,10 V18 H7 Z M10,12 H15 M10,14.5 H15" fill="#2b2b2b" stroke="#6e6e6e" stroke-width="1"/></svg>
<svg style="left:72.5px;top:128.0px;" width="20" height="19" viewBox="0 0 20 19"><path d="M11.5,7.5 L16.3,2.7 A1.6,1.6 0 0 1 18.6,5 L13.8,9.8" fill="none" stroke="#e8e8e8" stroke-width="1.2"/><path d="M8.5,6.5 L14.8,12.8 L12.6,15 L6.3,8.7 Z" fill="none" stroke="#e8e8e8" stroke-width="1.2"/><path d="M6.3,8.7 L12.6,15 L8.5,18.5 L0.8,13 Z" fill="#f5c842"/><path d="M3.5,13.5 L8.5,17.5 L10.5,15.5" fill="none" stroke="#e8860c" stroke-width="1.6"/></svg>
<div class="a" style="left:106.0px;top:80.8px;width:1px;height:69.9px;background:#464646"></div>
<div class="a" style="left:118.6px;top:80.8px;width:112.4px;height:27.6px;background:#353535;border-radius:5px"></div>
<div class="t" style="left:125.4px;top:88.0px;font-size:14px;color:#ececec;transform:scaleX(0.96);transform-origin:0 0;">Times New...</div>
<svg style="left:219.7px;top:93.4px" width="6.5" height="3.25"><polyline points="0,0 3.25,3.25 6.5,0" fill="none" stroke="#ddd" stroke-width="1.4"/></svg>
<div class="a" style="left:234.0px;top:80.8px;width:61.2px;height:27.6px;background:#353535;border-radius:5px"></div>
<div class="t" style="left:241.3px;top:88.0px;font-size:14px;color:#ececec;">12</div>
<svg style="left:284.0px;top:93.4px" width="6.5" height="3.25"><polyline points="0,0 3.25,3.25 6.5,0" fill="none" stroke="#ddd" stroke-width="1.4"/></svg>
<div class="t" style="left:303.6px;top:87.7px;font-size:17px;color:#d5d5d5;">A</div>
<svg style="left:316.0px;top:85.0px;" width="8" height="5" viewBox="0 0 8 5"><polyline points="0.5,4.5 4,1 7.5,4.5" fill="none" stroke="#3d9fe0" stroke-width="1.3"/></svg>
<div class="t" style="left:334.5px;top:89.9px;font-size:14.5px;color:#d5d5d5;">A</div>
<svg style="left:345.0px;top:85.0px;" width="8" height="5" viewBox="0 0 8 5"><polyline points="0.5,0.5 4,4 7.5,0.5" fill="none" stroke="#3d9fe0" stroke-width="1.3"/></svg>
<div class="a" style="left:365.8px;top:84.0px;width:1px;height:22.0px;background:#4a4a4a"></div>
<div class="t" style="left:379.0px;top:88.2px;font-size:15px;color:#d5d5d5;">Aa</div>
<svg style="left:405.5px;top:94.4px" width="6.5" height="3.25"><polyline points="0,0 3.25,3.25 6.5,0" fill="none" stroke="#ddd" stroke-width="1.4"/></svg>
<div class="a" style="left:426.2px;top:84.0px;width:1px;height:22.0px;background:#4a4a4a"></div>
<svg style="left:440.6px;top:84.0px;" width="20" height="21" viewBox="0 0 20 21"><path d="M1,17 L7,1 L13,17 M3.5,11 H10.5" fill="none" stroke="#d5d5d5" stroke-width="1.2"/><path d="M10,16 L15,11 L19,14.5 L14,19.5 Z" fill="#c050c0" fill-opacity=".45" stroke="#e070d8" stroke-width="1.2"/></svg>
<div class="t" style="left:128.0px;top:124.7px;font-size:15px;color:#d8d8d8;font-weight:bold;">B</div>
<div class="t" style="left:157.0px;top:124.7px;font-size:15px;color:#d8d8d8;font-style:italic;font-family:Liberation Serif;">I</div>
<div class="t" style="left:185.8px;top:124.7px;font-size:15px;color:#d8d8d8;text-decoration:underline;">U</div>
<svg style="left:208.4px;top:130.9px" width="6.5" height="3.25"><polyline points="0,0 3.25,3.25 6.5,0" fill="none" stroke="#ddd" stroke-width="1.4"/></svg>
<div class="t" style="left:226.0px;top:125.9px;font-size:14.5px;color:#d8d8d8;"><s>ab</s></div>
<div class="t" style="left:260.0px;top:125.7px;font-size:15px;color:#d8d8d8;">x<sub style="font-size:8.5px;color:#3d8fd0;vertical-align:-4px">2</sub></div>
<div class="t" style="left:290.3px;top:125.7px;font-size:15px;color:#d8d8d8;">x<sup style="font-size:8.5px;color:#3d8fd0;vertical-align:7px">2</sup></div>
<div class="a" style="left:318.6px;top:121.0px;width:1px;height:22.0px;background:#4a4a4a"></div>
<svg style="left:333.8px;top:120.0px;" width="18" height="21" viewBox="0 0 18 21"><path d="M1.5,20 L7.5,1.5 H10.5 L16.5,20 H13 L11.6,15.5 H6.4 L5,20 Z M7.3,12.5 H10.7 L9,7 Z" fill="#174a8c" stroke="#4cb4f6" stroke-width="1.3" stroke-linejoin="round"/></svg>
<svg style="left:358.3px;top:130.9px" width="6.5" height="3.25"><polyline points="0,0 3.25,3.25 6.5,0" fill="none" stroke="#ddd" stroke-width="1.4"/></svg>
<svg style="left:376.4px;top:120.0px;" width="19" height="21" viewBox="0 0 19 21"><path d="M5,12 L11,3 L14.5,5.5 L8.5,14 Z M5,12 L4,14.5 H8.5" fill="none" stroke="#d5d5d5" stroke-width="1.1"/><rect x="0" y="16" width="19" height="5" fill="#f5e600"/></svg>
<svg style="left:402.5px;top:130.9px" width="6.5" height="3.25"><polyline points="0,0 3.25,3.25 6.5,0" fill="none" stroke="#ddd" stroke-width="1.4"/></svg>
<svg style="left:419.8px;top:119.0px;" width="18" height="22" viewBox="0 0 18 22"><path d="M2,14 L9,1 L16,14 M4.5,9.5 H13.5" fill="none" stroke="#d5d5d5" stroke-width="1.2"/><rect x="0" y="17" width="18" height="4.5" fill="#e01e1e"/></svg>
<svg style="left:446.0px;top:130.9px" width="6.5" height="3.25"><polyline points="0,0 3.25,3.25 6.5,0" fill="none" stroke="#ddd" stroke-width="1.4"/></svg>
<div class="a" style="left:475.3px;top:80.8px;width:1px;height:69.9px;background:#464646"></div>
<svg style="left:496.0px;top:84.0px;" width="34" height="27" viewBox="0 0 34 27"><g stroke="#d8d8d8" stroke-width="1.4"><line x1="0" y1="1" x2="33" y2="1"/><line x1="5" y1="7" x2="28" y2="7"/><line x1="0" y1="13" x2="33" y2="13"/><line x1="5" y1="19" x2="28" y2="19"/><line x1="0" y1="25" x2="33" y2="25"/></g></svg>
<svg style="left:537.0px;top:94.4px" width="6.5" height="3.25"><polyline points="0,0 3.25,3.25 6.5,0" fill="none" stroke="#ddd" stroke-width="1.4"/></svg>
<div class="t" style="left:518.7px;top:121.3px;font-size:12.3px;color:#ececec;font-weight:bold;transform:translateX(-50%) scaleX(0.93);transform-origin:50% 0;">Paragraph</div>
<div class="a" style="left:563.3px;top:80.8px;width:1px;height:69.9px;background:#464646"></div>
<svg style="left:581.0px;top:82.7px;" width="35" height="33" viewBox="0 0 35 33"><path d="M1,25 L10,1 L19,25 M4.5,17 H15.5" fill="none" stroke="#d8d8d8" stroke-width="1.5"/><path d="M33,3 L17,22" stroke="#d8d8d8" stroke-width="3.2" stroke-linecap="round"/><path d="M33,3 L17,22" stroke="#2b2b2b" stroke-width="1" stroke-linecap="round"/><path d="M16,21 C11,21 10,27 6,29 C12,31 19,29 19,24 Z" fill="#2a8ae0"/></svg>
<svg style="left:620.7px;top:94.4px" width="6.5" height="3.25"><polyline points="0,0 3.25,3.25 6.5,0" fill="none" stroke="#ddd" stroke-width="1.4"/></svg>
<div class="t" style="left:602.5px;top:121.3px;font-size:12.3px;color:#ececec;font-weight:bold;transform:translateX(-50%) scaleX(0.93);transform-origin:50% 0;">Styles</div>
<div class="a" style="left:643.3px;top:80.8px;width:1px;height:69.9px;background:#464646"></div>
<svg style="left:662.0px;top:80.0px;" width="34" height="34" viewBox="0 0 34 34"><g fill="none" stroke="#d5401f" stroke-width="1.5"><rect x="0.8" y="0.8" width="32.4" height="32.4"/><rect x="3.8" y="3.8" width="11.8" height="11.8"/><rect x="18.4" y="3.8" width="11.8" height="11.8"/><rect x="3.8" y="18.4" width="11.8" height="11.8"/><rect x="18.4" y="18.4" width="11.8" height="11.8"/></g></svg>
<div class="t" style="left:679.2px;top:121.3px;font-size:12.3px;color:#ececec;font-weight:bold;transform:translateX(-50%) scaleX(0.93);transform-origin:50% 0;">Add-ins</div>
<div class="a" style="left:0.0px;top:157.0px;width:729.0px;height:930.0px;background:#2b2b2b;"></div>
<div class="a" style="left:17.0px;top:170.7px;width:683.0px;height:911.3px;background:#ffffff;"></div>
<div class="a" style="left:713.0px;top:157.0px;width:16.0px;height:930.0px;background:#262626;border-left:1px solid #333"></div>
<div class="a" style="left:713.5px;top:159.0px;width:14.0px;height:925.0px;background:#2e2e2e;border-left:1px solid #383838;border-right:1px solid #383838"></div>
<div class="a" style="left:716.0px;top:161.5px;width:9.0px;height:420.0px;background:#9c9c9c;border-radius:5px"></div>
<div class="a" style="left:2.0px;top:1086.0px;width:713.0px;height:13.0px;background:#242424;"></div>
<div class="a" style="left:4.0px;top:1088.0px;width:694.0px;height:9.0px;background:#999999;border-radius:5px"></div>
<div class="a" style="left:0.0px;top:1100.7px;width:729.0px;height:2.0px;background:#1a1a1a;"></div>
<div class="a" style="left:0.0px;top:1102.7px;width:729.0px;height:25.3px;background:linear-gradient(#4a4a4a,#3d3d3d);"></div>
<div class="t" style="left:28.0px;top:1108.4px;font-size:13.5px;color:#e2e2e2;transform:scaleX(1.02);transform-origin:0 0;">Page 1 of 2</div>
<div class="t" style="left:123.0px;top:1108.4px;font-size:13.5px;color:#e2e2e2;transform:scaleX(1.09);transform-origin:0 0;">430 words</div>
<svg style="left:242.0px;top:1108.0px;" width="17" height="14" viewBox="0 0 17 14"><path d="M1,4 V1 H5 M12,1 H16 V4 M16,10 V13 H12 M5,13 H1 V10" fill="none" stroke="#ddd" stroke-width="1.3"/><rect x="3.5" y="3.5" width="10" height="7" fill="none" stroke="#ddd" stroke-width="1"/></svg>
<div class="t" style="left:269.0px;top:1108.4px;font-size:13.5px;color:#e2e2e2;transform:scaleX(0.97);transform-origin:0 0;">Focus</div>
<div class="a" style="left:321.0px;top:1101.5px;width:37.5px;height:26.5px;background:#555555;"></div>
<svg style="left:331.0px;top:1107.0px;" width="17" height="15" viewBox="0 0 17 15"><rect x="1" y="1" width="15" height="13" fill="none" stroke="#eee" stroke-width="1.2"/><g stroke="#eee"><line x1="3.5" y1="4" x2="13.5" y2="4"/><line x1="3.5" y1="6.5" x2="13.5" y2="6.5"/><line x1="3.5" y1="9" x2="13.5" y2="9"/><line x1="3.5" y1="11.5" x2="13.5" y2="11.5"/></g></svg>
<svg style="left:371.0px;top:1107.0px;" width="19" height="18" viewBox="0 0 19 18"><rect x="1" y="1" width="14" height="12" fill="none" stroke="#ddd" stroke-width="1.2"/><g stroke="#ddd"><line x1="3.5" y1="4" x2="12" y2="4"/><line x1="3.5" y1="7" x2="10" y2="7"/></g><circle cx="14" cy="13" r="4.5" fill="#ddd"/></svg>
<svg style="left:411.0px;top:1108.0px;" width="19" height="14" viewBox="0 0 19 14"><g stroke="#ddd" stroke-width="1.2"><line x1="1" y1="1" x2="6" y2="1"/><line x1="6" y1="4.5" x2="18" y2="4.5"/><line x1="6" y1="8.5" x2="18" y2="8.5"/><line x1="3" y1="12.5" x2="18" y2="12.5"/></g></svg>
<svg style="left:451.0px;top:1108.0px;" width="18" height="14" viewBox="0 0 18 14"><g stroke="#ddd" stroke-width="1.3"><line x1="1" y1="1" x2="17" y2="1"/><line x1="1" y1="4.7" x2="17" y2="4.7"/><line x1="1" y1="8.4" x2="17" y2="8.4"/><line x1="1" y1="12.1" x2="12" y2="12.1"/></g></svg>
<div class="a" style="left:494.0px;top:1114.0px;width:9.5px;height:2.0px;background:#eee;"></div>
<div class="a" style="left:512.0px;top:1112.0px;width:114.0px;height:6.0px;background:#6b6b6b;border-radius:3px"></div>
<div class="a" style="left:559.0px;top:1107.0px;width:20.0px;height:16.0px;background:#dcdcdc;border-radius:8px"></div>
<svg style="left:634.0px;top:1110.0px;" width="10" height="10" viewBox="0 0 10 10"><path d="M5,0 V10 M0,5 H10" stroke="#eee" stroke-width="1.8"/></svg>
<div class="t" style="left:664.0px;top:1108.4px;font-size:13.5px;color:#e2e2e2;transform:scaleX(0.97);transform-origin:0 0;">100%</div>
<div class="t" style="left:358.3px;top:256.4px;font-size:16.3px;color:#000;font-family:'Liberation Serif',serif;transform:translateX(-50%) ;transform-origin:50% 0;-webkit-text-stroke:0.25px #000;"><b>How to Cite Articles in APA 7th Edition</b></div>
<div class="t" style="left:141.2px;top:290.7px;font-size:13.77px;color:#000;font-family:'Liberation Serif',serif;-webkit-text-stroke:0.25px #000;"><div style="width:475.70000000000005px;text-align:justify;text-align-last:justify;word-spacing:-2px;">Citing journal articles correctly in APA 7th edition is an essential skill for academic</div></div>
<div class="t" style="left:99.7px;top:322.3px;font-size:13.77px;color:#000;font-family:'Liberation Serif',serif;-webkit-text-stroke:0.25px #000;"><div style="width:517.2px;text-align:justify;text-align-last:justify;word-spacing:-2px;">writing, as it helps maintain clarity, consistency, and credibility in scholarly work. APA style</div></div>
<div class="t" style="left:99.7px;top:354.0px;font-size:13.77px;color:#000;font-family:'Liberation Serif',serif;-webkit-text-stroke:0.25px #000;"><div style="width:517.2px;text-align:justify;text-align-last:justify;word-spacing:-2px;">requires writers to follow a standardized structure so that readers can easily locate and verify</div></div>
<div class="t" style="left:99.7px;top:385.6px;font-size:13.77px;color:#000;font-family:'Liberation Serif',serif;-webkit-text-stroke:0.25px #000;"><div style="width:517.2px;text-align:justify;text-align-last:justify;word-spacing:-2px;">the original source of the information. The reference for a journal article includes several key</div></div>
<div class="t" style="left:99.7px;top:417.3px;font-size:13.77px;color:#000;font-family:'Liberation Serif',serif;-webkit-text-stroke:0.25px #000;"><div style="width:517.2px;text-align:justify;text-align-last:justify;word-spacing:-2px;">elements: the authors’ names, the year of publication, the article title, the journal title, the</div></div>
<div class="t" style="left:99.7px;top:449.0px;font-size:13.77px;color:#000;font-family:'Liberation Serif',serif;-webkit-text-stroke:0.25px #000;"><div style="width:517.2px;text-align:justify;text-align-last:justify;word-spacing:-2px;">volume and issue numbers, the page range, and, when available, the digital object identifier</div></div>
<div class="t" style="left:99.7px;top:480.6px;font-size:13.77px;color:#000;font-family:'Liberation Serif',serif;-webkit-text-stroke:0.25px #000;"><div style="width:517.2px;text-align:justify;text-align-last:justify;word-spacing:-2px;">(DOI). These components must appear in a specific order and follow strict formatting rules. In</div></div>
<div class="t" style="left:99.7px;top:512.3px;font-size:13.77px;color:#000;font-family:'Liberation Serif',serif;-webkit-text-stroke:0.25px #000;"><div style="width:517.2px;text-align:justify;text-align-last:justify;word-spacing:-2px;">APA style, authors’ names are listed by last name followed by initials, and only the first word</div></div>
<div class="t" style="left:99.7px;top:543.9px;font-size:13.77px;color:#000;font-family:'Liberation Serif',serif;-webkit-text-stroke:0.25px #000;">of the article title, the first word after a colon, and proper nouns are capitalized.</div>
<div class="t" style="left:141.2px;top:575.6px;font-size:13.77px;color:#000;font-family:'Liberation Serif',serif;-webkit-text-stroke:0.25px #000;"><div style="width:475.70000000000005px;text-align:justify;text-align-last:justify;word-spacing:-2px;">Journal titles, however, are written in title case and italicized. The volume number is</div></div>
<div class="t" style="left:99.7px;top:607.3px;font-size:13.77px;color:#000;font-family:'Liberation Serif',serif;-webkit-text-stroke:0.25px #000;"><div style="width:517.2px;text-align:justify;text-align-last:justify;word-spacing:-2px;">also italicized, but the issue number is not. Instead, the issue number appears in parentheses</div></div>
<div class="t" style="left:99.7px;top:638.9px;font-size:13.77px;color:#000;font-family:'Liberation Serif',serif;-webkit-text-stroke:0.25px #000;"><div style="width:517.2px;text-align:justify;text-align-last:justify;word-spacing:-2px;">immediately after the volume number, followed by a comma and the article’s page range. If a</div></div>
<div class="t" style="left:99.7px;top:670.6px;font-size:13.77px;color:#000;font-family:'Liberation Serif',serif;-webkit-text-stroke:0.25px #000;"><div style="width:517.2px;text-align:justify;text-align-last:justify;word-spacing:-2px;">DOI is present, it should be included at the end of the reference in URL format, without adding</div></div>
<div class="t" style="left:99.7px;top:702.2px;font-size:13.77px;color:#000;font-family:'Liberation Serif',serif;-webkit-text-stroke:0.25px #000;"><div style="width:517.2px;text-align:justify;text-align-last:justify;word-spacing:-2px;">a period after it. DOIs are strongly encouraged in APA 7th edition because they create a stable</div></div>
<div class="t" style="left:99.7px;top:733.9px;font-size:13.77px;color:#000;font-family:'Liberation Serif',serif;-webkit-text-stroke:0.25px #000;"><div style="width:517.2px;text-align:justify;text-align-last:justify;word-spacing:-2px;">and permanent pathway to the article, even if the website or database structure changes over</div></div>
<div class="t" style="left:99.7px;top:765.6px;font-size:13.77px;color:#000;font-family:'Liberation Serif',serif;-webkit-text-stroke:0.25px #000;">time.</div>
<div class="t" style="left:141.2px;top:797.2px;font-size:13.77px;color:#000;font-family:'Liberation Serif',serif;-webkit-text-stroke:0.25px #000;"><div style="width:475.70000000000005px;text-align:justify;text-align-last:justify;word-spacing:-2px;">In-text citations play an equally important role in APA style. They allow writers to</div></div>
<div class="t" style="left:99.7px;top:828.9px;font-size:13.77px;color:#000;font-family:'Liberation Serif',serif;-webkit-text-stroke:0.25px #000;"><div style="width:517.2px;text-align:justify;text-align-last:justify;word-spacing:-2px;">credit the original source within the body of their work and guide readers to the full reference</div></div>
<div class="t" style="left:99.7px;top:860.5px;font-size:13.77px;color:#000;font-family:'Liberation Serif',serif;-webkit-text-stroke:0.25px #000;"><div style="width:517.2px;text-align:justify;text-align-last:justify;word-spacing:-2px;">in the reference list. In-text citations typically include the author’s last name and the publication</div></div>
<div class="t" style="left:99.7px;top:892.2px;font-size:13.77px;color:#000;font-family:'Liberation Serif',serif;-webkit-text-stroke:0.25px #000;"><div style="width:517.2px;text-align:justify;text-align-last:justify;word-spacing:-2px;">year. These citations can be written in parenthetical form, such as (Author, Year), or narrative</div></div>
<div class="t" style="left:99.7px;top:923.9px;font-size:13.77px;color:#000;font-family:'Liberation Serif',serif;-webkit-text-stroke:0.25px #000;"><div style="width:517.2px;text-align:justify;text-align-last:justify;word-spacing:-2px;">form, in which the author’s name is incorporated into the sentence, followed by the year in</div></div>
<div class="t" style="left:99.7px;top:955.5px;font-size:13.77px;color:#000;font-family:'Liberation Serif',serif;-webkit-text-stroke:0.25px #000;"><div style="width:517.2px;text-align:justify;text-align-last:justify;word-spacing:-2px;">parentheses. When an article has three or more authors, APA 7th edition simplifies the process</div></div>
<div class="t" style="left:99.7px;top:987.2px;font-size:13.77px;color:#000;font-family:'Liberation Serif',serif;-webkit-text-stroke:0.25px #000;"><div style="width:517.2px;text-align:justify;text-align-last:justify;word-spacing:-2px;">by requiring writers to use “et al.” after the first author’s name in all citations, even the first</div></div>
<div class="t" style="left:99.7px;top:1018.8px;font-size:13.77px;color:#000;font-family:'Liberation Serif',serif;-webkit-text-stroke:0.25px #000;">one. This reduces clutter and makes citations easier to read.</div>

</div>
<div id="dlg" class="a" style="left:1665px;top:938px;width:305px;height:356px;background:#242426;border-radius:12px;box-shadow:0 0 0 1px #3e3e40, -6px 10px 40px rgba(0,0,0,.55)">
<div class="t" style="left:10.7px;top:4.8px;font-size:8px;color:#b8b8b8;transform:scaleX(0.92);transform-origin:0 0;">Paragraph</div>
<div class="a" style="left:10.3px;top:28.3px;width:284.7px;height:296.4px;background:#28282a;border:1px solid #333335;border-radius:5px"></div>
<div class="a" style="left:72.0px;top:22.4px;width:161.5px;height:12.5px;background:#38383a;border-radius:4px"></div>
<div class="a" style="left:72.0px;top:22.4px;width:79.0px;height:12.5px;background:#0a6ff0;border-radius:4px"></div>
<div class="t" style="left:111.5px;top:25.1px;font-size:8px;color:#ffffff;transform:translateX(-50%) scaleX(0.92);transform-origin:50% 0;">Indents and Spacing</div>
<div class="t" style="left:192.5px;top:25.1px;font-size:8px;color:#dcdcdc;transform:translateX(-50%) scaleX(0.92);transform-origin:50% 0;">Line and Page Breaks</div>
<div class="t" style="left:21.0px;top:44.4px;font-size:8px;color:#e8e8e8;font-weight:bold;transform:scaleX(0.95);transform-origin:0 0;">General</div>
<div class="t" style="left:71.2px;top:59.0px;font-size:8px;color:#d8d8d8;transform:translateX(-100%) scaleX(0.92);transform-origin:100% 0;">Alignment:</div>
<div class="a" style="left:76.0px;top:56.6px;width:56.4px;height:12.6px;background:#38383a;border-radius:3px"></div>
<div class="t" style="left:82.0px;top:59.3px;font-size:8px;color:#e0e0e0;transform:scaleX(0.92);transform-origin:0 0;">Justified</div>
<svg style="left:123.4px;top:58.9px;" width="5" height="8" viewBox="0 0 5 8"><path d="M0.5,3 L2.5,0.8 L4.5,3 M0.5,5 L2.5,7.2 L4.5,5" fill="none" stroke="#ddd" stroke-width=".9"/></svg>
<div class="t" style="left:71.2px;top:77.0px;font-size:8px;color:#d8d8d8;transform:translateX(-100%) scaleX(0.92);transform-origin:100% 0;">Outline Level:</div>
<div class="a" style="left:76.0px;top:74.6px;width:56.4px;height:12.6px;background:#38383a;border-radius:3px"></div>
<div class="t" style="left:82.0px;top:77.3px;font-size:8px;color:#e0e0e0;transform:scaleX(0.92);transform-origin:0 0;">Body Text</div>
<svg style="left:123.4px;top:76.9px;" width="5" height="8" viewBox="0 0 5 8"><path d="M0.5,3 L2.5,0.8 L4.5,3 M0.5,5 L2.5,7.2 L4.5,5" fill="none" stroke="#ddd" stroke-width=".9"/></svg>
<div class="a" style="left:142.6px;top:76.5px;width:8.0px;height:8.0px;background:#2f2f31;border-radius:2px"></div>
<div class="t" style="left:154.0px;top:76.7px;font-size:8px;color:#6a6a6a;transform:scaleX(0.92);transform-origin:0 0;">Collapsed by default</div>
<div class="a" style="left:17.0px;top:99.0px;width:271.0px;height:1.0px;background:#3a3a3c;"></div>
<div class="t" style="left:21.0px;top:110.8px;font-size:8px;color:#e8e8e8;font-weight:bold;transform:scaleX(0.95);transform-origin:0 0;">Indentation</div>
<div class="t" style="left:71.2px;top:125.5px;font-size:8px;color:#d8d8d8;transform:translateX(-100%) scaleX(0.92);transform-origin:100% 0;">Left:</div>
<div class="a" style="left:76.0px;top:123.1px;width:28.0px;height:12.6px;background:#1f1f21;border-radius:3px"></div>
<div class="t" style="left:79.0px;top:125.8px;font-size:8px;color:#e8e8e8;transform:scaleX(0.92);transform-origin:0 0;">0 cm</div>
<div class="a" style="left:108.5px;top:122.4px;width:10.0px;height:14.0px;background:#303032;border-radius:4px"></div>
<svg style="left:110.0px;top:123.9px;" width="7" height="11" viewBox="0 0 7 11"><path d="M0.5,3.5 L3.5,0.8 L6.5,3.5 M0.5,7.5 L3.5,10.2 L6.5,7.5" fill="none" stroke="#ddd" stroke-width=".9"/></svg>
<div class="t" style="left:71.2px;top:142.6px;font-size:8px;color:#d8d8d8;transform:translateX(-100%) scaleX(0.92);transform-origin:100% 0;">Right:</div>
<div class="a" style="left:76.0px;top:140.2px;width:28.0px;height:12.6px;background:#1f1f21;border-radius:3px"></div>
<div class="t" style="left:79.0px;top:142.9px;font-size:8px;color:#e8e8e8;transform:scaleX(0.92);transform-origin:0 0;">0 cm</div>
<div class="a" style="left:108.5px;top:139.5px;width:10.0px;height:14.0px;background:#303032;border-radius:4px"></div>
<svg style="left:110.0px;top:141.0px;" width="7" height="11" viewBox="0 0 7 11"><path d="M0.5,3.5 L3.5,0.8 L6.5,3.5 M0.5,7.5 L3.5,10.2 L6.5,7.5" fill="none" stroke="#ddd" stroke-width=".9"/></svg>
<div class="t" style="left:167.4px;top:135.3px;font-size:8px;color:#d8d8d8;transform:translateX(-100%) scaleX(0.92);transform-origin:100% 0;">Special:</div>
<div class="a" style="left:172.0px;top:132.9px;width:51.7px;height:12.6px;background:#38383a;border-radius:3px"></div>
<div class="t" style="left:178.0px;top:135.6px;font-size:8px;color:#e0e0e0;transform:scaleX(0.92);transform-origin:0 0;">First line</div>
<svg style="left:214.7px;top:135.2px;" width="5" height="8" viewBox="0 0 5 8"><path d="M0.5,3 L2.5,0.8 L4.5,3 M0.5,5 L2.5,7.2 L4.5,5" fill="none" stroke="#ddd" stroke-width=".9"/></svg>
<div class="t" style="left:238.4px;top:135.3px;font-size:8px;color:#d8d8d8;transform:translateX(-100%) scaleX(0.92);transform-origin:100% 0;">By:</div>
<div class="a" style="left:242.0px;top:130.7px;width:31.8px;height:12.6px;background:#1f1f21;border-radius:3px;box-shadow:0 0 0 1.5px #2e6fc0"></div>
<div class="t" style="left:245.0px;top:133.4px;font-size:8px;color:#e8e8e8;transform:scaleX(0.92);transform-origin:0 0;">1,27 cm</div>
<div class="a" style="left:278.0px;top:131.5px;width:10.0px;height:14.0px;background:#303032;border-radius:4px"></div>
<svg style="left:279.5px;top:133.0px;" width="7" height="11" viewBox="0 0 7 11"><path d="M0.5,3.5 L3.5,0.8 L6.5,3.5 M0.5,7.5 L3.5,10.2 L6.5,7.5" fill="none" stroke="#ddd" stroke-width=".9"/></svg>
<div class="a" style="left:28.0px;top:161.0px;width:8.0px;height:8.0px;background:#3a3a3c;border-radius:2px"></div>
<div class="t" style="left:39.0px;top:161.1px;font-size:8px;color:#dcdcdc;transform:scaleX(0.92);transform-origin:0 0;">Mirror Indents</div>
<div class="a" style="left:28.0px;top:173.0px;width:8.0px;height:8.0px;background:#0a6ff0;border-radius:2px"></div>
<svg style="left:29.3px;top:174.4px;" width="6" height="5.5" viewBox="0 0 6 5.5"><path d="M0.5,2.8 L2.3,4.7 L5.5,0.8" fill="none" stroke="#fff" stroke-width="1.2"/></svg>
<div class="t" style="left:39.0px;top:173.1px;font-size:8px;color:#dcdcdc;transform:scaleX(0.92);transform-origin:0 0;">Automatically adjust the right indent when the document grid is defined</div>
<div class="a" style="left:17.0px;top:189.3px;width:271.0px;height:1.0px;background:#3a3a3c;"></div>
<div class="t" style="left:21.0px;top:195.8px;font-size:8px;color:#e8e8e8;font-weight:bold;transform:scaleX(0.95);transform-origin:0 0;">Spacing</div>
<div class="t" style="left:71.2px;top:211.3px;font-size:8px;color:#d8d8d8;transform:translateX(-100%) scaleX(0.92);transform-origin:100% 0;">Before:</div>
<div class="a" style="left:76.0px;top:208.9px;width:28.0px;height:12.6px;background:#1f1f21;border-radius:3px"></div>
<div class="t" style="left:79.0px;top:211.6px;font-size:8px;color:#e8e8e8;transform:scaleX(0.92);transform-origin:0 0;">Auto</div>
<div class="a" style="left:108.5px;top:208.2px;width:10.0px;height:14.0px;background:#303032;border-radius:4px"></div>
<svg style="left:110.0px;top:209.7px;" width="7" height="11" viewBox="0 0 7 11"><path d="M0.5,3.5 L3.5,0.8 L6.5,3.5 M0.5,7.5 L3.5,10.2 L6.5,7.5" fill="none" stroke="#ddd" stroke-width=".9"/></svg>
<div class="t" style="left:71.2px;top:228.6px;font-size:8px;color:#d8d8d8;transform:translateX(-100%) scaleX(0.92);transform-origin:100% 0;">After:</div>
<div class="a" style="left:76.0px;top:226.2px;width:28.0px;height:12.6px;background:#1f1f21;border-radius:3px"></div>
<div class="t" style="left:79.0px;top:228.9px;font-size:8px;color:#e8e8e8;transform:scaleX(0.92);transform-origin:0 0;">Auto</div>
<div class="a" style="left:108.5px;top:225.5px;width:10.0px;height:14.0px;background:#303032;border-radius:4px"></div>
<svg style="left:110.0px;top:227.0px;" width="7" height="11" viewBox="0 0 7 11"><path d="M0.5,3.5 L3.5,0.8 L6.5,3.5 M0.5,7.5 L3.5,10.2 L6.5,7.5" fill="none" stroke="#ddd" stroke-width=".9"/></svg>
<div class="t" style="left:167.4px;top:219.7px;font-size:8px;color:#d8d8d8;transform:translateX(-100%) scaleX(0.92);transform-origin:100% 0;">Line spacing:</div>
<div class="a" style="left:172.0px;top:217.3px;width:51.7px;height:12.6px;background:#38383a;border-radius:3px"></div>
<div class="t" style="left:178.0px;top:220.0px;font-size:8px;color:#e0e0e0;transform:scaleX(0.92);transform-origin:0 0;">Double</div>
<svg style="left:214.7px;top:219.6px;" width="5" height="8" viewBox="0 0 5 8"><path d="M0.5,3 L2.5,0.8 L4.5,3 M0.5,5 L2.5,7.2 L4.5,5" fill="none" stroke="#ddd" stroke-width=".9"/></svg>
<div class="t" style="left:238.4px;top:219.7px;font-size:8px;color:#d8d8d8;transform:translateX(-100%) scaleX(0.92);transform-origin:100% 0;">At:</div>
<div class="a" style="left:246.0px;top:217.3px;width:31.0px;height:12.6px;background:#1f1f21;border-radius:3px"></div>
<div class="a" style="left:278.0px;top:216.6px;width:10.0px;height:14.0px;background:#303032;border-radius:4px"></div>
<svg style="left:279.5px;top:218.1px;" width="7" height="11" viewBox="0 0 7 11"><path d="M0.5,3.5 L3.5,0.8 L6.5,3.5 M0.5,7.5 L3.5,10.2 L6.5,7.5" fill="none" stroke="#ddd" stroke-width=".9"/></svg>
<div class="a" style="left:28.0px;top:246.7px;width:8.0px;height:8.0px;background:#0a6ff0;border-radius:2px"></div>
<svg style="left:29.3px;top:248.1px;" width="6" height="5.5" viewBox="0 0 6 5.5"><path d="M0.5,2.8 L2.3,4.7 L5.5,0.8" fill="none" stroke="#fff" stroke-width="1.2"/></svg>
<div class="t" style="left:39.0px;top:246.8px;font-size:8px;color:#dcdcdc;transform:scaleX(0.92);transform-origin:0 0;">Don't add a space between paragraphs of the same style</div>
<div class="a" style="left:28.0px;top:256.0px;width:8.0px;height:8.0px;background:#0a6ff0;border-radius:2px"></div>
<svg style="left:29.3px;top:257.4px;" width="6" height="5.5" viewBox="0 0 6 5.5"><path d="M0.5,2.8 L2.3,4.7 L5.5,0.8" fill="none" stroke="#fff" stroke-width="1.2"/></svg>
<div class="t" style="left:39.0px;top:256.1px;font-size:8px;color:#dcdcdc;transform:scaleX(0.92);transform-origin:0 0;">Snap to grid when document grid is defined</div>
<div class="a" style="left:21.5px;top:269.8px;width:262.5px;height:44.2px;background:#ffffff;"></div>
<div class="t" style="left:32.0px;top:275.8px;font-size:4.6px;color:#c4c4c4;transform:scaleX(0.98);transform-origin:0 0;">Previous Paragraph Previous Paragraph Previous Paragraph Previous Paragraph Previous Paragraph Previous Paragraph</div>
<div class="t" style="left:32.0px;top:282.8px;font-size:4.6px;color:#c4c4c4;transform:scaleX(0.98);transform-origin:0 0;">Previous Paragraph Previous Paragraph Previous Paragraph Previous Paragraph</div>
<div class="t" style="left:56.0px;top:293.1px;font-size:4.6px;color:#222;font-weight:bold;transform:scaleX(0.93);transform-origin:0 0;">Another important feature of APA referencing is accuracy. Every comma, period, italicized word, and capital</div>
<div class="t" style="left:32.0px;top:304.8px;font-size:4.6px;color:#222;font-weight:bold;transform:scaleX(0.93);transform-origin:0 0;">letter serves a purpose. Small errors can make references confusing or difficult for readers to follow. Therefore, writers</div>
<div class="a" style="left:10.7px;top:333.6px;width:33.3px;height:12.1px;background:#38383a;border-radius:3px"></div>
<div class="t" style="left:27.4px;top:336.0px;font-size:8px;color:#e0e0e0;transform:translateX(-50%) scaleX(0.92);transform-origin:50% 0;">Tabs...</div>
<div class="a" style="left:51.0px;top:333.6px;width:57.5px;height:12.1px;background:#38383a;border-radius:3px"></div>
<div class="t" style="left:79.7px;top:336.0px;font-size:8px;color:#e0e0e0;transform:translateX(-50%) scaleX(0.92);transform-origin:50% 0;">Set as Default</div>
<div class="a" style="left:218.4px;top:333.6px;width:34.6px;height:12.1px;background:#38383a;border-radius:3px"></div>
<div class="t" style="left:235.7px;top:336.0px;font-size:8px;color:#e0e0e0;transform:translateX(-50%) scaleX(0.92);transform-origin:50% 0;">Cancel</div>
<div class="a" style="left:260.0px;top:333.6px;width:34.8px;height:12.1px;background:#0a6ff0;border-radius:3px"></div>
<div class="t" style="left:277.4px;top:336.0px;font-size:8px;color:#ffffff;transform:translateX(-50%) scaleX(0.92);transform-origin:50% 0;">OK</div>
</div>
</body></html>
